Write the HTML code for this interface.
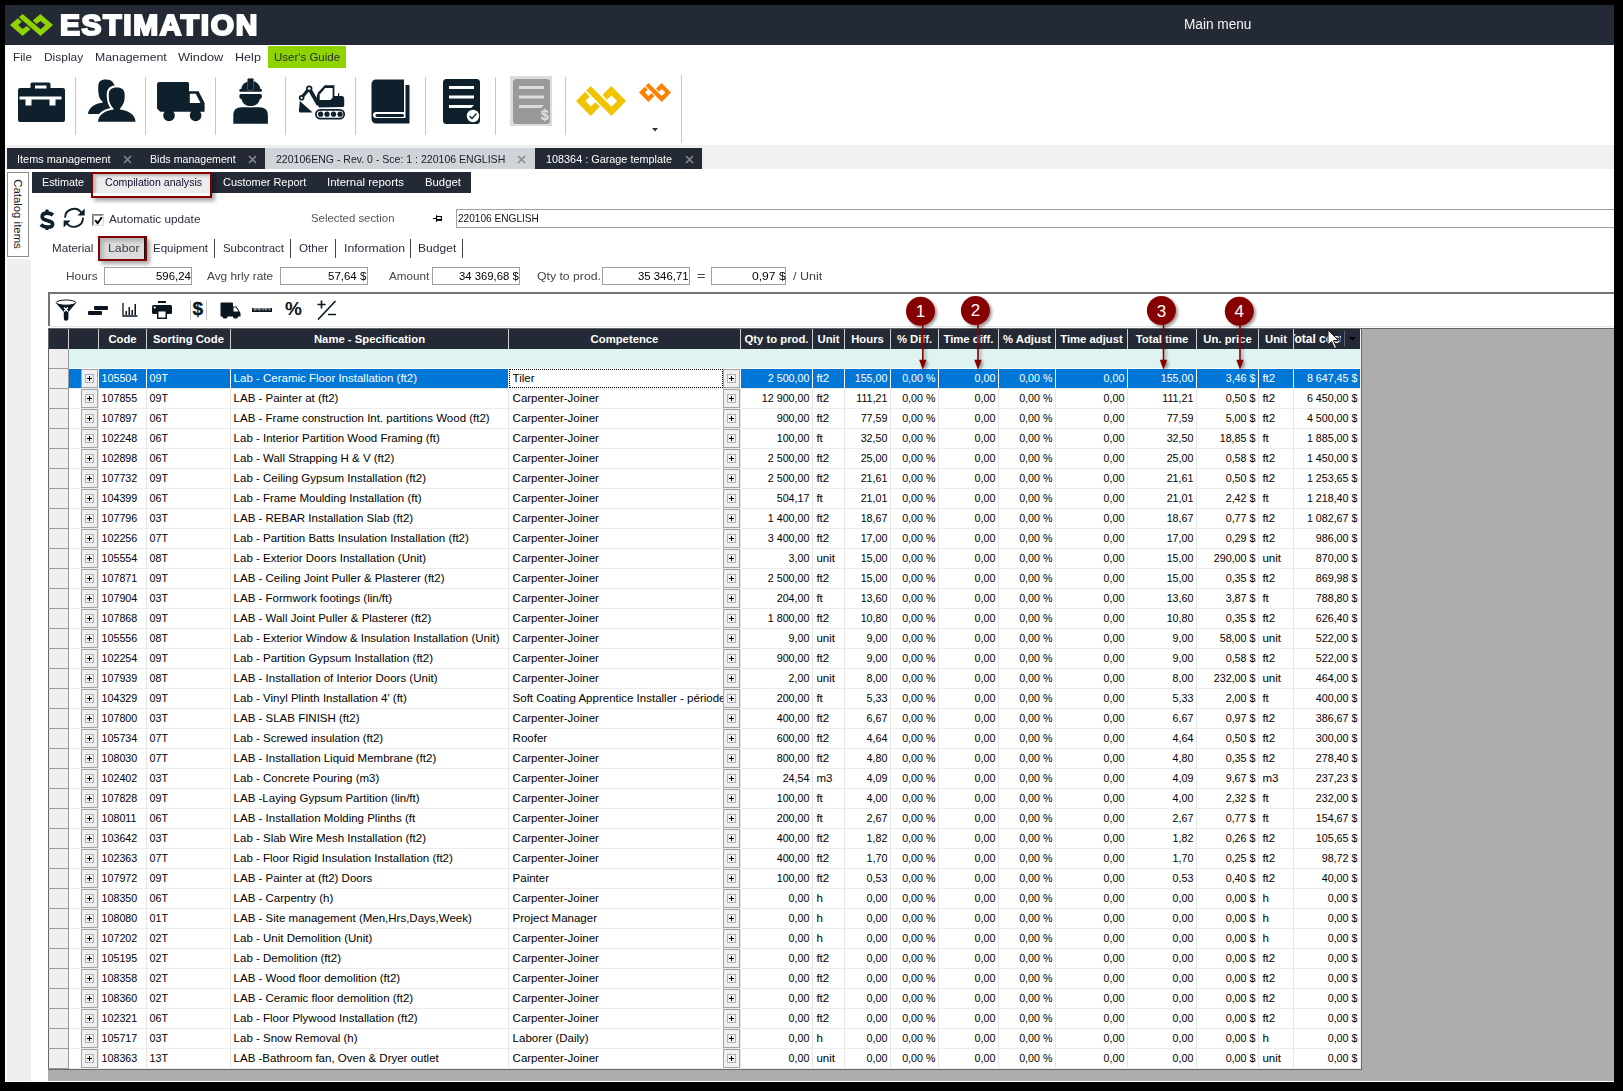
<!DOCTYPE html>
<html><head><meta charset="utf-8">
<style>
*{margin:0;padding:0;box-sizing:border-box}
html,body{width:1623px;height:1091px;overflow:hidden;background:#000}
body{position:relative;font-family:"Liberation Sans",sans-serif;font-size:11.3px;color:#000}
.a{position:absolute}
.t{position:absolute;white-space:nowrap}
.sep{position:absolute;width:1px;background:#c8c8c8}
.gr{position:absolute;left:48px;top:329px;width:1313px}
.hd{position:absolute;top:0;height:20px;background:#232a35;color:#fff;font-weight:bold;font-size:11.3px;line-height:20px;text-align:center;white-space:nowrap;overflow:hidden}
.c{position:absolute;height:19px;line-height:19px;white-space:nowrap;overflow:hidden;padding:0 2.6px;font-size:10.7px}
.n{font-size:11.5px}.u{font-size:11.5px;padding-left:3.4px}.cp{padding-left:3.6px}
.r{text-align:right}
.vl{position:absolute;width:1px;background:#e6e6e6}
.eb{position:absolute;width:17px;height:19px;background:#f0f0f0;border:1px solid #a3a3a3}
.eb:after{content:"";position:absolute;left:3px;top:4px;width:9px;height:9px;border:1px solid #a6b0cc;box-sizing:border-box}
.eb i{position:absolute;left:5px;top:8px;width:5px;height:1px;background:#000}
.eb b{position:absolute;left:7px;top:6px;width:1px;height:5px;background:#000}
.inp{position:absolute;height:18px;border:1px solid #a0a0a0;background:#fff;line-height:16px;text-align:right;padding-right:3px;white-space:nowrap}
</style></head><body>

<div class="a" style="left:5px;top:5px;width:1609px;height:1077px;background:#fff"></div>
<div class="a" style="left:5px;top:5px;width:1609px;height:40px;background:#232a35"></div>
<svg style="position:absolute;left:10px;top:14px" width="43" height="22" viewBox="110 110 1345 805" preserveAspectRatio="none"><path fill="#8fd400" d="M505 110 L1065 665 L1215 515 L1065 365 L935 480 L825 345 L1060 110 L1455 515 L1065 915 L385 230 Z"/><path fill="#8fd400" d="M355 265 L110 510 L505 915 L755 660 L630 545 L505 660 L365 515 L480 390 Z"/></svg>
<div class="t" style="left:60.2px;top:5.9px;font-size:28.6px;line-height:38px;color:#fff;font-weight:bold;letter-spacing:1.6px;transform:scaleX(1.046);transform-origin:0 0;-webkit-text-stroke:2.1px #fff">ESTIMATION</div>
<div class="t" style="left:1183.97px;top:16.02px;font-size:13.8px;line-height:18px;color:#f4f4f4;font-weight:normal;transform:scaleX(0.9878);transform-origin:0 0;">Main menu</div>
<div class="a" style="left:268px;top:46px;width:78px;height:22px;background:#8fd400"></div>
<div class="t" style="left:12.70px;top:47.58px;font-size:11.6px;line-height:18px;color:#2a2a3a;font-weight:normal;transform:scaleX(1.0118);transform-origin:0 0;">File</div>
<div class="t" style="left:43.50px;top:47.58px;font-size:11.6px;line-height:18px;color:#2a2a3a;font-weight:normal;transform:scaleX(1.0294);transform-origin:0 0;">Display</div>
<div class="t" style="left:94.60px;top:47.58px;font-size:11.6px;line-height:18px;color:#2a2a3a;font-weight:normal;transform:scaleX(1.0607);transform-origin:0 0;">Management</div>
<div class="t" style="left:178.30px;top:47.58px;font-size:11.6px;line-height:18px;color:#2a2a3a;font-weight:normal;transform:scaleX(1.0989);transform-origin:0 0;">Window</div>
<div class="t" style="left:235.40px;top:47.58px;font-size:11.6px;line-height:18px;color:#2a2a3a;font-weight:normal;transform:scaleX(1.0860);transform-origin:0 0;">Help</div>
<div class="t" style="left:273.60px;top:47.58px;font-size:11.6px;line-height:18px;color:#2a2a3a;font-weight:normal;transform:scaleX(0.9914);transform-origin:0 0;">User&#x27;s Guide</div>
<div class="sep" style="left:75px;top:77px;height:58px"></div>
<div class="sep" style="left:145px;top:77px;height:58px"></div>
<div class="sep" style="left:215px;top:77px;height:58px"></div>
<div class="sep" style="left:285px;top:77px;height:58px"></div>
<div class="sep" style="left:355px;top:77px;height:58px"></div>
<div class="sep" style="left:425px;top:77px;height:58px"></div>
<div class="sep" style="left:495px;top:77px;height:58px"></div>
<div class="sep" style="left:565px;top:77px;height:58px"></div>
<div class="sep" style="left:681px;top:75px;height:68px"></div>
<svg class="a" style="left:16px;top:81px" width="50" height="42" viewBox="0 0 50 42">
<path fill="#0f202d" d="M15.5 1.5 h17.5 a1.5 1.5 0 0 1 1.5 1.5 v4 h12.5 a2 2 0 0 1 2 2 v30 a2 2 0 0 1 -2 2 h-43 a2 2 0 0 1 -2 -2 v-30 a2 2 0 0 1 2 -2 h10.5 v-4 a1.5 1.5 0 0 1 1.5 -1.5 z M19 4.5 v3 h11.5 v-3 z"/>
<path fill="#fff" d="M3.5 15.5 h42 v3 h-6 v6 h-6 v-6 h-18 v6 h-6 v-6 h-6 z"/>
</svg>
<svg class="a" style="left:87px;top:79px" width="50" height="45" viewBox="0 0 50 45">
<path fill="#0f202d" d="M11.2 8.5 C11.2 2.5 13.5 0.45 18.9 0.45 C23 0.45 25.5 1.8 26.6 4.5 L30 10 V30 L20 34.9 H0.96 C1.8 28.5 8 24.5 16.2 23.6 L15 22.2 C12 19.5 11.2 15 11.2 8.5 Z"/>
<path fill="#0f202d" stroke="#fff" stroke-width="4.2" paint-order="stroke" d="M21.8 16 C21.8 10.5 24.5 8.4 29.7 8.4 C34.9 8.4 37.7 10.5 37.7 16 C37.7 21.5 37 25 33.8 28.5 L32.6 30.6 C41 31.5 48.2 35.5 48.5 42.8 H11 C11.5 35.5 18.5 31.5 26.9 30.6 L25.7 28.5 C22.5 25 21.8 21.5 21.8 16 Z"/>
</svg>
<svg class="a" style="left:156px;top:81px" width="50" height="42" viewBox="0 0 50 42">
<path fill="#0f202d" d="M1 3.5 a2.5 2.5 0 0 1 2.5 -2.5 H31.5 a1.5 1.5 0 0 1 1.5 1.5 V10.3 H42.6 L48.6 21.9 V30.7 H4.25 L1 27.4 Z"/>
<path fill="#fff" d="M33.8 12.7 H39.8 L44.5 21.9 H33.8 Z"/>
<circle fill="#0f202d" cx="13" cy="34.4" r="5.8"/>
<circle fill="#0f202d" cx="39.6" cy="34.4" r="5.8"/>
</svg>
<svg class="a" style="left:232px;top:77px" width="38" height="48" viewBox="0 0 38 48">
<path fill="#0f202d" d="M9.1 12.5 A9.7 8.6 0 0 1 28.5 12.5 Z"/>
<rect fill="#0f202d" x="7.3" y="12" width="22.6" height="2.8" rx="1"/>
<rect fill="#0f202d" stroke="#6a7580" stroke-width="0.6" x="15.6" y="1.4" width="6" height="12" rx="1.2"/>
<path fill="#0f202d" d="M1.3 46.7 V39 C1.3 33.5 3.5 31 8 30.6 L10 30.2 H27.2 L29.2 30.6 C33.7 31 35.9 33.5 35.9 39 V46.7 Z"/>
<path fill="#0f202d" stroke="#fff" stroke-width="2.2" paint-order="stroke" d="M8.5 17.1 H28.7 C30.2 17.1 30.2 21.7 28.7 21.7 H28 C27 26.5 23.5 29.1 18.7 29.1 C13.9 29.1 10.4 26.5 9.4 21.7 H8.5 C7 21.7 7 17.1 8.5 17.1 Z"/>
</svg>
<svg class="a" style="left:297px;top:84px" width="50" height="38" viewBox="0 0 50 38">
<path fill="#0f202d" d="M20.8 8.7 L27.7 1.3 H37.4 V12 H45 Q47.2 12 47.2 14.5 V21.5 Q47.2 23.1 45.6 23.1 L22.2 23.5 L18.5 17.5 Z"/>
<path fill="#fff" d="M22.7 10.6 L28.2 4.1 H35.6 V13.8 L33.3 16.1 H22.7 Z"/>
<rect fill="#0f202d" x="41" y="9.2" width="1.2" height="3"/>
<path fill="none" stroke="#0f202d" stroke-width="3.8" d="M12.2 4.6 L21.5 20.8"/>
<path fill="none" stroke="#0f202d" stroke-width="3.2" d="M12.2 4.6 L4.6 13.8"/>
<circle fill="#0f202d" cx="12.2" cy="4.6" r="3.2"/><circle fill="#fff" cx="12.2" cy="4.6" r="1.4"/>
<circle fill="#0f202d" cx="4.6" cy="13.8" r="2.8"/><circle fill="#fff" cx="4.6" cy="13.8" r="1.1"/>
<path fill="#0f202d" d="M2.8 17 L15.7 28.6 H3.5 Q1.9 28.6 1.9 27 Z"/>
<rect fill="none" stroke="#0f202d" stroke-width="1.8" x="18.9" y="25.8" width="28.3" height="8.8" rx="4.4"/>
<circle fill="#0f202d" cx="23.6" cy="30.2" r="2.6"/><circle fill="#0f202d" cx="30" cy="30.2" r="2.6"/><circle fill="#0f202d" cx="36.5" cy="30.2" r="2.6"/><circle fill="#0f202d" cx="43" cy="30.2" r="2.6"/>
</svg>
<svg class="a" style="left:371px;top:79px" width="40" height="46" viewBox="0 0 40 46">
<path fill="#0f202d" d="M5 0.5 H33 V33 H5 A3 3 0 0 0 5 39 H34.5 V6 H38.5 V44.5 H5 A4.5 4.5 0 0 1 0.5 40 V5 A4.5 4.5 0 0 1 5 0.5 Z"/>
<rect fill="#0f202d" x="4.5" y="35" width="28.5" height="3" rx="1.5"/>
</svg>
<svg class="a" style="left:442px;top:78px" width="40" height="47" viewBox="0 0 40 47">
<rect fill="#0f202d" x="1" y="1" width="37" height="45" rx="3.5"/>
<rect fill="#fff" x="7" y="8" width="25" height="3"/>
<rect fill="#fff" x="7" y="17.5" width="25" height="3"/>
<path fill="#fff" d="M7 27 H32 L29 30 H7 Z"/>
<circle fill="#fff" cx="31" cy="38" r="6.2"/>
<path fill="none" stroke="#0f202d" stroke-width="1.3" d="M27.5 38 L30 40.5 L34.5 35.5"/>
</svg>
<div class="a" style="left:510px;top:76px;width:42px;height:50px;background:#dcdcdc"></div>
<svg class="a" style="left:512px;top:78px" width="40" height="47" viewBox="0 0 40 47">
<rect fill="#999" x="1" y="1" width="37" height="45" rx="3.5"/>
<rect fill="#ddd" x="7" y="8" width="25" height="3"/>
<rect fill="#ddd" x="7" y="17.5" width="25" height="3"/>
<path fill="#ddd" d="M7 27 H32 L29 30 H7 Z"/>
<text x="32.8" y="41.6" font-family="Liberation Sans" font-size="14.5" font-weight="bold" fill="#ddd" stroke="#ddd" stroke-width="0.3" text-anchor="middle">$</text>
</svg>
<svg style="position:absolute;left:576px;top:86px" width="50" height="30" viewBox="110 110 1345 805" preserveAspectRatio="none"><path fill="#f0c400" d="M505 110 L1065 665 L1215 515 L1065 365 L935 480 L825 345 L1060 110 L1455 515 L1065 915 L385 230 Z"/><path fill="#f0c400" d="M355 265 L110 510 L505 915 L755 660 L630 545 L505 660 L365 515 L480 390 Z"/></svg>
<svg style="position:absolute;left:639px;top:82.5px" width="32" height="19" viewBox="110 110 1345 805" preserveAspectRatio="none"><path fill="#ff8000" d="M505 110 L1065 665 L1215 515 L1065 365 L935 480 L825 345 L1060 110 L1455 515 L1065 915 L385 230 Z"/><path fill="#ff8000" d="M355 265 L110 510 L505 915 L755 660 L630 545 L505 660 L365 515 L480 390 Z"/></svg>
<svg class="a" style="left:651.5px;top:127.5px" width="6" height="4" viewBox="0 0 6 4"><path d="M0 0 H6 L3 3.5 Z" fill="#333"/></svg>
<div class="a" style="left:5px;top:145px;width:1609px;height:24px;background:#f0f0f0"></div>
<div class="a" style="left:7px;top:148px;width:695px;height:21px;background:#232a35"></div>
<div class="a" style="left:265px;top:148px;width:270px;height:21px;background:#cfd4d9"></div>
<div class="t" style="left:17.16px;top:150.13px;font-size:10.6px;line-height:18px;color:#fff;font-weight:normal;transform:scaleX(1.0311);transform-origin:0 0;">Items management</div>
<svg class="a" style="left:122.8px;top:155px" width="9" height="9" viewBox="0 0 9 9"><path d="M1 1 L8 8 M8 1 L1 8" stroke="#8a8a8a" stroke-width="1.6"/></svg>
<div class="t" style="left:149.86px;top:150.13px;font-size:10.6px;line-height:18px;color:#fff;font-weight:normal;transform:scaleX(1.0033);transform-origin:0 0;">Bids management</div>
<svg class="a" style="left:247.9px;top:155px" width="9" height="9" viewBox="0 0 9 9"><path d="M1 1 L8 8 M8 1 L1 8" stroke="#8a8a8a" stroke-width="1.6"/></svg>
<div class="t" style="left:275.56px;top:150.13px;font-size:10.6px;line-height:18px;color:#1a1a2a;font-weight:normal;transform:scaleX(0.9940);transform-origin:0 0;">220106ENG - Rev. 0 - Sce: 1 : 220106 ENGLISH</div>
<svg class="a" style="left:517.2px;top:155px" width="9" height="9" viewBox="0 0 9 9"><path d="M1 1 L8 8 M8 1 L1 8" stroke="#8a8a8a" stroke-width="1.6"/></svg>
<div class="t" style="left:545.76px;top:150.13px;font-size:10.6px;line-height:18px;color:#fff;font-weight:normal;transform:scaleX(1.0236);transform-origin:0 0;">108364 : Garage template</div>
<svg class="a" style="left:684.5px;top:155px" width="9" height="9" viewBox="0 0 9 9"><path d="M1 1 L8 8 M8 1 L1 8" stroke="#8a8a8a" stroke-width="1.6"/></svg>
<div class="a" style="left:7px;top:172px;width:22px;height:85px;background:#fff;border:1px solid #8c8c8c"></div>
<div class="t" style="left:18px;top:214px;transform:translate(-50%,-50%) rotate(90deg);font-size:11.4px;line-height:14px;color:#1a1a1a">Catalog items</div>
<div class="a" style="left:7px;top:259px;width:24px;height:822px;background:#efefef"></div>
<div class="a" style="left:32px;top:172px;width:439px;height:21px;background:#232a35"></div>
<div class="t" style="left:42.08px;top:174.00px;font-size:10.4px;line-height:18px;color:#fff;font-weight:normal;transform:scaleX(1.0390);transform-origin:0 0;">Estimate</div>
<div class="t" style="left:222.78px;top:174.00px;font-size:10.4px;line-height:18px;color:#fff;font-weight:normal;transform:scaleX(1.0529);transform-origin:0 0;">Customer Report</div>
<div class="t" style="left:326.98px;top:174.00px;font-size:10.4px;line-height:18px;color:#fff;font-weight:normal;transform:scaleX(1.0999);transform-origin:0 0;">Internal reports</div>
<div class="t" style="left:424.98px;top:174.00px;font-size:10.4px;line-height:18px;color:#fff;font-weight:normal;transform:scaleX(1.0887);transform-origin:0 0;">Budget</div>
<div class="a" style="left:91px;top:172px;width:121px;height:26px;border:2px solid #840000;box-shadow:3px 3px 4px rgba(0,0,0,0.35);background:#fff"></div>
<div class="a" style="left:93px;top:174px;width:117px;height:19px;background:#ececec;box-shadow:inset 3px 2px 3px rgba(0,0,0,0.22)"></div>
<div class="t" style="left:105.08px;top:174.00px;font-size:10.4px;line-height:18px;color:#0a0a30;font-weight:normal;transform:scaleX(1.0186);transform-origin:0 0;">Compilation analysis</div>
<svg class="a" style="left:39px;top:209px" width="17" height="22" viewBox="0 0 17 22">
<rect fill="#0f202d" x="6.4" y="0.5" width="3.2" height="3.6" rx="0.8"/>
<rect fill="#0f202d" x="6.4" y="17.2" width="3.2" height="3.8" rx="0.8"/>
<path fill="none" stroke="#0f202d" stroke-width="3.7" d="M14 6 C12.2 4.6 10.2 4.1 8.2 4.1 C5.2 4.1 3.2 5.5 3.2 7.7 C3.2 10.4 6 11 8.5 11.6 C11.6 12.3 13.6 13.1 13.6 15.2 C13.6 17.2 11.2 18.2 8.2 18.2 C5.9 18.2 3.6 17.4 1.8 15.7"/>
</svg>
<svg class="a" style="left:62px;top:207px" width="24" height="23" viewBox="0 0 24 23">
<path fill="none" stroke="#0f202d" stroke-width="1.9" d="M3.05 10.8 A9 9 0 0 1 19.4 5.64"/>
<path fill="#0f202d" d="M22.7 1.5 V8.5 H15.5 Z"/>
<path fill="none" stroke="#0f202d" stroke-width="1.9" d="M21.05 10.8 A9 9 0 0 1 4.68 15.96"/>
<path fill="#0f202d" d="M1.65 20.5 V13.56 H8.6 Z"/>
</svg>
<div class="a" style="left:92px;top:214px;width:12px;height:12px;border:1px solid;border-color:#7a7a7a #dcdcdc #dcdcdc #7a7a7a;background:#fff"></div>
<div class="a" style="left:93px;top:215px;width:10px;height:10px;border:1px solid;border-color:#a0a0a0 #f4f4f4 #f4f4f4 #a0a0a0"></div>
<svg class="a" style="left:94px;top:216px" width="9" height="9" viewBox="0 0 9 9"><path d="M1.2 4.2 L3.6 7.2 L7.8 1.2" fill="none" stroke="#000" stroke-width="2"/></svg>
<div class="t" style="left:109.33px;top:209.95px;font-size:11.1px;line-height:18px;color:#2b2b40;font-weight:normal;transform:scaleX(1.0587);transform-origin:0 0;">Automatic update</div>
<div class="t" style="left:310.55px;top:209.06px;font-size:10.8px;line-height:18px;color:#555;font-weight:normal;transform:scaleX(1.0534);transform-origin:0 0;">Selected section</div>
<svg class="a" style="left:433px;top:214px" width="10" height="9" viewBox="0 0 10 9"><path d="M0 4.5 H3.5 M3.6 1.2 V7.8 M3.6 2.5 H8.4 V6.5" fill="none" stroke="#000" stroke-width="1.1"/><rect x="3.6" y="5" width="5.4" height="1.9" fill="#000"/></svg>
<div class="a" style="left:456px;top:209px;width:1158px;height:19px;border:1px solid #a0a0a0;border-right:none;background:#fff"></div>
<div class="t" style="left:457.65px;top:209.06px;font-size:10.8px;line-height:18px;color:#111;font-weight:normal;transform:scaleX(0.9361);transform-origin:0 0;">220106 ENGLISH</div>
<div class="t" style="left:51.53px;top:238.95px;font-size:11.1px;line-height:18px;color:#2b2b40;font-weight:normal;transform:scaleX(1.0489);transform-origin:0 0;">Material</div>
<div class="a" style="left:98px;top:236px;width:49px;height:25px;border:2px solid #840000;box-shadow:3px 3px 4px rgba(0,0,0,0.35);background:#dcdcdc"></div>
<div class="a" style="left:100px;top:238px;width:45px;height:21px;box-shadow:inset 3px 3px 4px rgba(0,0,0,0.2)"></div>
<div class="a" style="left:144px;top:238px;width:1px;height:21px;background:#111"></div>
<div class="t" style="left:107.53px;top:238.95px;font-size:11.1px;line-height:18px;color:#3a3a4a;font-weight:normal;transform:scaleX(1.1093);transform-origin:0 0;">Labor</div>
<div class="t" style="left:152.53px;top:238.95px;font-size:11.1px;line-height:18px;color:#2b2b40;font-weight:normal;transform:scaleX(1.0365);transform-origin:0 0;">Equipment</div>
<div class="t" style="left:222.63px;top:238.95px;font-size:11.1px;line-height:18px;color:#2b2b40;font-weight:normal;transform:scaleX(1.0281);transform-origin:0 0;">Subcontract</div>
<div class="t" style="left:298.53px;top:238.95px;font-size:11.1px;line-height:18px;color:#2b2b40;font-weight:normal;transform:scaleX(1.0485);transform-origin:0 0;">Other</div>
<div class="t" style="left:343.63px;top:238.95px;font-size:11.1px;line-height:18px;color:#2b2b40;font-weight:normal;transform:scaleX(1.1021);transform-origin:0 0;">Information</div>
<div class="t" style="left:418.33px;top:238.95px;font-size:11.1px;line-height:18px;color:#2b2b40;font-weight:normal;transform:scaleX(1.0875);transform-origin:0 0;">Budget</div>
<div class="a" style="left:214px;top:239px;width:1px;height:19px;background:#444"></div>
<div class="a" style="left:290px;top:239px;width:1px;height:19px;background:#444"></div>
<div class="a" style="left:335px;top:239px;width:1px;height:19px;background:#444"></div>
<div class="a" style="left:410px;top:239px;width:1px;height:19px;background:#444"></div>
<div class="a" style="left:462px;top:239px;width:1px;height:19px;background:#444"></div>
<div class="t" style="left:66.34px;top:267.29px;font-size:11px;line-height:18px;color:#444;font-weight:normal;transform:scaleX(1.0777);transform-origin:0 0;">Hours</div>
<div class="t" style="left:207.14px;top:267.29px;font-size:11px;line-height:18px;color:#444;font-weight:normal;transform:scaleX(1.0740);transform-origin:0 0;">Avg hrly rate</div>
<div class="t" style="left:389.14px;top:267.29px;font-size:11px;line-height:18px;color:#444;font-weight:normal;transform:scaleX(1.0601);transform-origin:0 0;">Amount</div>
<div class="t" style="left:537.34px;top:267.29px;font-size:11px;line-height:18px;color:#444;font-weight:normal;transform:scaleX(1.1128);transform-origin:0 0;">Qty to prod.</div>
<div class="t" style="left:793.24px;top:267.29px;font-size:11px;line-height:18px;color:#444;font-weight:normal;transform:scaleX(1.1368);transform-origin:0 0;">/ Unit</div>
<div class="t" style="left:697.04px;top:267.29px;font-size:11px;line-height:18px;color:#444;font-weight:normal;transform:scaleX(1.3092);transform-origin:0 0;">=</div>
<div class="a" style="left:104px;top:267px;width:88px;height:18px;border:1px solid #a0a0a0;background:#fff"></div>
<div class="a" style="left:280px;top:267px;width:88px;height:18px;border:1px solid #a0a0a0;background:#fff"></div>
<div class="a" style="left:432px;top:267px;width:88px;height:18px;border:1px solid #a0a0a0;background:#fff"></div>
<div class="a" style="left:602px;top:267px;width:88px;height:18px;border:1px solid #a0a0a0;background:#fff"></div>
<div class="a" style="left:711px;top:267px;width:75px;height:18px;border:1px solid #a0a0a0;background:#fff"></div>
<div class="t" style="left:155.74px;top:267.29px;font-size:11px;line-height:18px;color:#000;font-weight:normal;transform:scaleX(1.0391);transform-origin:0 0;">596,24</div>
<div class="t" style="left:328.44px;top:267.29px;font-size:11px;line-height:18px;color:#000;font-weight:normal;transform:scaleX(1.0429);transform-origin:0 0;">57,64 $</div>
<div class="t" style="left:459.34px;top:267.29px;font-size:11px;line-height:18px;color:#000;font-weight:normal;transform:scaleX(1.0281);transform-origin:0 0;">34 369,68 $</div>
<div class="t" style="left:637.94px;top:267.29px;font-size:11px;line-height:18px;color:#000;font-weight:normal;transform:scaleX(1.0332);transform-origin:0 0;">35 346,71</div>
<div class="t" style="left:751.74px;top:267.29px;font-size:11px;line-height:18px;color:#000;font-weight:normal;transform:scaleX(1.1000);transform-origin:0 0;">0,97 $</div>
<div class="a" style="left:48px;top:292px;width:1566px;height:2px;background:#747474"></div>
<div class="a" style="left:48px;top:292px;width:2px;height:34px;background:#747474"></div>
<div class="a" style="left:49px;top:326px;width:1565px;height:1px;background:#e4e4e4"></div>
<svg class="a" style="left:55px;top:299px" width="22" height="22" viewBox="0 0 22 22">
<path fill="#0a1520" d="M1.2 4.2 L8.8 13 V19.5 A2.2 2.2 0 0 0 13.4 19.5 V13 L20.8 4.2 Z"/>
<ellipse fill="#fff" stroke="#0a1520" stroke-width="1" cx="11" cy="3.6" rx="9.8" ry="2.6"/>
<path d="M9 8.5 L13 12.5 M13 8.5 L9 12.5" stroke="#fff" stroke-width="1.4"/>
</svg>
<div class="a" style="left:94px;top:306px;width:14px;height:3.5px;background:#0a1520;border-radius:1px"></div>
<div class="a" style="left:88px;top:311px;width:14px;height:3.5px;background:#0a1520;border-radius:1px"></div>
<svg class="a" style="left:122px;top:303px" width="16" height="14" viewBox="0 0 16 14">
<path fill="none" stroke="#0a1520" stroke-width="1.3" d="M1 0 V13 H15.5"/>
<rect fill="#0a1520" x="3.5" y="8" width="1.5" height="4"/><rect fill="#0a1520" x="6.5" y="4" width="1.5" height="8"/><rect fill="#0a1520" x="9.5" y="7" width="1.5" height="5"/><rect fill="#0a1520" x="12.5" y="1" width="1.5" height="11"/>
</svg>
<svg class="a" style="left:152px;top:301px" width="20" height="18" viewBox="0 0 20 18">
<rect fill="#0a1520" x="6" y="0" width="8" height="2"/>
<rect fill="#0a1520" x="0" y="4" width="20" height="9" rx="1.5"/>
<circle fill="#fff" cx="2.7" cy="6.5" r="1.1"/>
<rect fill="#0a1520" x="5" y="9" width="10" height="9"/>
<rect fill="#fff" x="6.5" y="10.5" width="7" height="6"/>
</svg>
<div class="a" style="left:190px;top:300px;width:1px;height:20px;background:#c8c8c8"></div>
<div class="a" style="left:206px;top:300px;width:1px;height:20px;background:#c8c8c8"></div>
<div class="t" style="left:192.5px;top:298px;font-size:19px;font-weight:bold;line-height:22px;color:#0a1520;-webkit-text-stroke:0.35px #0a1520">$</div>
<svg class="a" style="left:220px;top:302px" width="21" height="17" viewBox="0 0 21 17">
<path fill="#0a1520" d="M1 0.5 h11 a1 1 0 0 1 1 1 v3 h3.5 l4 6.5 v3.5 h-20 v-13 a1 1 0 0 1 0.5 -1 z"/>
<path fill="#fff" d="M13.5 5.5 h2.5 l2.5 4 h-5 z"/>
<circle fill="#0a1520" cx="5" cy="14" r="2.6"/><circle fill="#0a1520" cx="15.5" cy="14" r="2.6"/>
</svg>
<svg class="a" style="left:252px;top:307px" width="20" height="5" viewBox="0 0 20 5">
<rect fill="#8a8f94" x="0" y="1" width="20" height="3"/>
<rect fill="#0a1520" x="0" y="1" width="1.6" height="4" rx="0.6"/><rect fill="#0a1520" x="18.4" y="1" width="1.6" height="4" rx="0.6"/>
<rect fill="#0a1520" x="0" y="3.4" width="20" height="1.6" rx="0.6"/>
<rect fill="#0a1520" x="4.5" y="2.2" width="1.4" height="2"/><rect fill="#0a1520" x="8.6" y="1.8" width="1.6" height="2"/><rect fill="#0a1520" x="11.6" y="2.2" width="1.2" height="2"/><rect fill="#0a1520" x="15" y="1.8" width="1.6" height="2"/>
</svg>
<div class="t" style="left:285px;top:298px;font-size:19px;font-weight:bold;line-height:22px;color:#0a1520">%</div>
<svg class="a" style="left:317px;top:300px" width="20" height="20" viewBox="0 0 20 20">
<path stroke="#0a1520" stroke-width="1.6" fill="none" d="M1 19.5 L18.5 1 M4.5 0.5 V8.5 M0.5 4.5 H8.5 M11 14.5 H19"/>
</svg>
<div class="a" style="left:1362px;top:329px;width:252px;height:752px;background:#acacac"></div>
<div class="a" style="left:48px;top:1070px;width:1566px;height:11px;background:#acacac"></div>
<div class="a" style="left:48px;top:1069px;width:1314px;height:1px;background:#6a6a6a"></div>
<div class="a" style="left:48px;top:328px;width:1566px;height:1px;background:#666"></div>
<div class="a" style="left:1360px;top:329px;width:1px;height:740px;background:#f4f4f4"></div>
<div class="a" style="left:1361px;top:329px;width:1px;height:741px;background:#666"></div>
<div class="a" style="left:49px;top:329px;width:1311px;height:20px;background:#232a35"></div>
<div class="a" style="left:68px;top:329px;width:1px;height:20px;background:#cfcfcf"></div>
<div class="a" style="left:98px;top:329px;width:1px;height:20px;background:#cfcfcf"></div>
<div class="hd" style="left:99px;top:329px;width:47px">Code</div>
<div class="a" style="left:146px;top:329px;width:1px;height:20px;background:#cfcfcf"></div>
<div class="hd" style="left:147px;top:329px;width:83px">Sorting Code</div>
<div class="a" style="left:230px;top:329px;width:1px;height:20px;background:#cfcfcf"></div>
<div class="hd" style="left:231px;top:329px;width:277px">Name - Specification</div>
<div class="a" style="left:508px;top:329px;width:1px;height:20px;background:#cfcfcf"></div>
<div class="hd" style="left:509px;top:329px;width:231px">Competence</div>
<div class="a" style="left:740px;top:329px;width:1px;height:20px;background:#cfcfcf"></div>
<div class="hd" style="left:741px;top:329px;width:71px">Qty to prod.</div>
<div class="a" style="left:812px;top:329px;width:1px;height:20px;background:#cfcfcf"></div>
<div class="hd" style="left:813px;top:329px;width:31px">Unit</div>
<div class="a" style="left:844px;top:329px;width:1px;height:20px;background:#cfcfcf"></div>
<div class="hd" style="left:845px;top:329px;width:45px">Hours</div>
<div class="a" style="left:890px;top:329px;width:1px;height:20px;background:#cfcfcf"></div>
<div class="hd" style="left:891px;top:329px;width:47px">% Diff.</div>
<div class="a" style="left:938px;top:329px;width:1px;height:20px;background:#cfcfcf"></div>
<div class="hd" style="left:939px;top:329px;width:59px">Time diff.</div>
<div class="a" style="left:998px;top:329px;width:1px;height:20px;background:#cfcfcf"></div>
<div class="hd" style="left:999px;top:329px;width:56px">% Adjust</div>
<div class="a" style="left:1055px;top:329px;width:1px;height:20px;background:#cfcfcf"></div>
<div class="hd" style="left:1056px;top:329px;width:71px">Time adjust</div>
<div class="a" style="left:1127px;top:329px;width:1px;height:20px;background:#cfcfcf"></div>
<div class="hd" style="left:1128px;top:329px;width:68px">Total time</div>
<div class="a" style="left:1196px;top:329px;width:1px;height:20px;background:#cfcfcf"></div>
<div class="hd" style="left:1197px;top:329px;width:61px">Un. price</div>
<div class="a" style="left:1258px;top:329px;width:1px;height:20px;background:#cfcfcf"></div>
<div class="hd" style="left:1259px;top:329px;width:34px">Unit</div>
<div class="a" style="left:1293px;top:329px;width:1px;height:20px;background:#cfcfcf"></div>
<div class="hd" style="left:1294px;top:329px;width:47px"><span style="position:absolute;left:-6px;top:0;font-size:12px">Total cost</span></div>
<div class="a" style="left:1344px;top:331px;width:1px;height:15px;background:#5a6270"></div>
<svg class="a" style="left:1349px;top:337px" width="7" height="4" viewBox="0 0 7 4"><path d="M0 0 H7 L3.5 4 Z" fill="#000"/></svg>
<svg class="a" style="left:1327px;top:329px" width="13" height="21" viewBox="0 0 13 21"><path d="M1 1 V16 L4.5 12.5 L7.5 19.5 L9.5 18.5 L6.5 11.5 H11.5 Z" fill="#fff" stroke="#1a1a1a" stroke-width="1" stroke-linejoin="round"/></svg>
<div class="a" style="left:68px;top:349px;width:1292px;height:19px;background:#dff3f1"></div>
<div class="a" style="left:48px;top:349px;width:21px;height:720px;background:#efefef;border-right:1px solid #9a9a9a"></div>
<div class="a" style="left:48px;top:368px;width:21px;height:1px;background:#9a9a9a"></div>
<div class="a" style="left:48px;top:328px;width:1px;height:741px;background:#666"></div>
<div class="a" style="left:69px;top:369px;width:12px;height:19px;background:#0076d6"></div>
<div class="a" style="left:99px;top:369px;width:410px;height:19px;background:#0076d6"></div>
<div class="a" style="left:740px;top:369px;width:620px;height:19px;background:#0076d6"></div>
<div class="a" style="left:48px;top:388px;width:21px;height:1px;background:#9a9a9a"></div>
<div class="a" style="left:69px;top:388px;width:1291px;height:1px;background:#ececec"></div>
<div class="eb" style="left:81px;top:369px"><i></i><b></b></div>
<div class="eb" style="left:723px;top:369px"><i></i><b></b></div>
<div class="c" style="left:99px;top:369px;width:47px;color:#fff">105504</div>
<div class="c" style="left:147px;top:369px;width:83px;color:#fff">09T</div>
<div class="c n" style="left:231px;top:369px;width:277px;color:#fff">Lab - Ceramic Floor Installation (ft2)</div>
<div class="c n cp" style="left:509px;top:369px;width:214px;color:#fff">Tiler</div>
<div class="c r" style="left:741px;top:369px;width:71px;color:#fff">2 500,00</div>
<div class="c u" style="left:813px;top:369px;width:31px;color:#fff">ft2</div>
<div class="c r" style="left:845px;top:369px;width:45px;color:#fff">155,00</div>
<div class="c r" style="left:891px;top:369px;width:47px;color:#fff">0,00 %</div>
<div class="c r" style="left:939px;top:369px;width:59px;color:#fff">0,00</div>
<div class="c r" style="left:999px;top:369px;width:56px;color:#fff">0,00 %</div>
<div class="c r" style="left:1056px;top:369px;width:71px;color:#fff">0,00</div>
<div class="c r" style="left:1128px;top:369px;width:68px;color:#fff">155,00</div>
<div class="c r" style="left:1197px;top:369px;width:61px;color:#fff">3,46 $</div>
<div class="c u" style="left:1259px;top:369px;width:34px;color:#fff">ft2</div>
<div class="c r" style="left:1294px;top:369px;width:66px;color:#fff">8 647,45 $</div>
<div class="vl" style="left:98px;top:369px;height:19px;background:#fff"></div>
<div class="vl" style="left:146px;top:369px;height:19px;background:#fff"></div>
<div class="vl" style="left:230px;top:369px;height:19px;background:#fff"></div>
<div class="vl" style="left:508px;top:369px;height:19px;background:#fff"></div>
<div class="vl" style="left:740px;top:369px;height:19px;background:#fff"></div>
<div class="vl" style="left:812px;top:369px;height:19px;background:#fff"></div>
<div class="vl" style="left:844px;top:369px;height:19px;background:#fff"></div>
<div class="vl" style="left:890px;top:369px;height:19px;background:#fff"></div>
<div class="vl" style="left:938px;top:369px;height:19px;background:#fff"></div>
<div class="vl" style="left:998px;top:369px;height:19px;background:#fff"></div>
<div class="vl" style="left:1055px;top:369px;height:19px;background:#fff"></div>
<div class="vl" style="left:1127px;top:369px;height:19px;background:#fff"></div>
<div class="vl" style="left:1196px;top:369px;height:19px;background:#fff"></div>
<div class="vl" style="left:1258px;top:369px;height:19px;background:#fff"></div>
<div class="vl" style="left:1293px;top:369px;height:19px;background:#fff"></div>
<div class="a" style="left:48px;top:408px;width:21px;height:1px;background:#9a9a9a"></div>
<div class="a" style="left:69px;top:408px;width:1291px;height:1px;background:#ececec"></div>
<div class="eb" style="left:81px;top:389px"><i></i><b></b></div>
<div class="eb" style="left:723px;top:389px"><i></i><b></b></div>
<div class="c" style="left:99px;top:389px;width:47px;color:#000">107855</div>
<div class="c" style="left:147px;top:389px;width:83px;color:#000">09T</div>
<div class="c n" style="left:231px;top:389px;width:277px;color:#000">LAB - Painter at (ft2)</div>
<div class="c n cp" style="left:509px;top:389px;width:214px;color:#000">Carpenter-Joiner</div>
<div class="c r" style="left:741px;top:389px;width:71px;color:#000">12 900,00</div>
<div class="c u" style="left:813px;top:389px;width:31px;color:#000">ft2</div>
<div class="c r" style="left:845px;top:389px;width:45px;color:#000">111,21</div>
<div class="c r" style="left:891px;top:389px;width:47px;color:#000">0,00 %</div>
<div class="c r" style="left:939px;top:389px;width:59px;color:#000">0,00</div>
<div class="c r" style="left:999px;top:389px;width:56px;color:#000">0,00 %</div>
<div class="c r" style="left:1056px;top:389px;width:71px;color:#000">0,00</div>
<div class="c r" style="left:1128px;top:389px;width:68px;color:#000">111,21</div>
<div class="c r" style="left:1197px;top:389px;width:61px;color:#000">0,50 $</div>
<div class="c u" style="left:1259px;top:389px;width:34px;color:#000">ft2</div>
<div class="c r" style="left:1294px;top:389px;width:66px;color:#000">6 450,00 $</div>
<div class="vl" style="left:98px;top:389px;height:19px;background:#e6e6e6"></div>
<div class="vl" style="left:146px;top:389px;height:19px;background:#e6e6e6"></div>
<div class="vl" style="left:230px;top:389px;height:19px;background:#e6e6e6"></div>
<div class="vl" style="left:508px;top:389px;height:19px;background:#e6e6e6"></div>
<div class="vl" style="left:740px;top:389px;height:19px;background:#e6e6e6"></div>
<div class="vl" style="left:812px;top:389px;height:19px;background:#e6e6e6"></div>
<div class="vl" style="left:844px;top:389px;height:19px;background:#e6e6e6"></div>
<div class="vl" style="left:890px;top:389px;height:19px;background:#e6e6e6"></div>
<div class="vl" style="left:938px;top:389px;height:19px;background:#e6e6e6"></div>
<div class="vl" style="left:998px;top:389px;height:19px;background:#e6e6e6"></div>
<div class="vl" style="left:1055px;top:389px;height:19px;background:#e6e6e6"></div>
<div class="vl" style="left:1127px;top:389px;height:19px;background:#e6e6e6"></div>
<div class="vl" style="left:1196px;top:389px;height:19px;background:#e6e6e6"></div>
<div class="vl" style="left:1258px;top:389px;height:19px;background:#e6e6e6"></div>
<div class="vl" style="left:1293px;top:389px;height:19px;background:#e6e6e6"></div>
<div class="a" style="left:48px;top:428px;width:21px;height:1px;background:#9a9a9a"></div>
<div class="a" style="left:69px;top:428px;width:1291px;height:1px;background:#ececec"></div>
<div class="eb" style="left:81px;top:409px"><i></i><b></b></div>
<div class="eb" style="left:723px;top:409px"><i></i><b></b></div>
<div class="c" style="left:99px;top:409px;width:47px;color:#000">107897</div>
<div class="c" style="left:147px;top:409px;width:83px;color:#000">06T</div>
<div class="c n" style="left:231px;top:409px;width:277px;color:#000">LAB - Frame construction Int. partitions Wood (ft2)</div>
<div class="c n cp" style="left:509px;top:409px;width:214px;color:#000">Carpenter-Joiner</div>
<div class="c r" style="left:741px;top:409px;width:71px;color:#000">900,00</div>
<div class="c u" style="left:813px;top:409px;width:31px;color:#000">ft2</div>
<div class="c r" style="left:845px;top:409px;width:45px;color:#000">77,59</div>
<div class="c r" style="left:891px;top:409px;width:47px;color:#000">0,00 %</div>
<div class="c r" style="left:939px;top:409px;width:59px;color:#000">0,00</div>
<div class="c r" style="left:999px;top:409px;width:56px;color:#000">0,00 %</div>
<div class="c r" style="left:1056px;top:409px;width:71px;color:#000">0,00</div>
<div class="c r" style="left:1128px;top:409px;width:68px;color:#000">77,59</div>
<div class="c r" style="left:1197px;top:409px;width:61px;color:#000">5,00 $</div>
<div class="c u" style="left:1259px;top:409px;width:34px;color:#000">ft2</div>
<div class="c r" style="left:1294px;top:409px;width:66px;color:#000">4 500,00 $</div>
<div class="vl" style="left:98px;top:409px;height:19px;background:#e6e6e6"></div>
<div class="vl" style="left:146px;top:409px;height:19px;background:#e6e6e6"></div>
<div class="vl" style="left:230px;top:409px;height:19px;background:#e6e6e6"></div>
<div class="vl" style="left:508px;top:409px;height:19px;background:#e6e6e6"></div>
<div class="vl" style="left:740px;top:409px;height:19px;background:#e6e6e6"></div>
<div class="vl" style="left:812px;top:409px;height:19px;background:#e6e6e6"></div>
<div class="vl" style="left:844px;top:409px;height:19px;background:#e6e6e6"></div>
<div class="vl" style="left:890px;top:409px;height:19px;background:#e6e6e6"></div>
<div class="vl" style="left:938px;top:409px;height:19px;background:#e6e6e6"></div>
<div class="vl" style="left:998px;top:409px;height:19px;background:#e6e6e6"></div>
<div class="vl" style="left:1055px;top:409px;height:19px;background:#e6e6e6"></div>
<div class="vl" style="left:1127px;top:409px;height:19px;background:#e6e6e6"></div>
<div class="vl" style="left:1196px;top:409px;height:19px;background:#e6e6e6"></div>
<div class="vl" style="left:1258px;top:409px;height:19px;background:#e6e6e6"></div>
<div class="vl" style="left:1293px;top:409px;height:19px;background:#e6e6e6"></div>
<div class="a" style="left:48px;top:448px;width:21px;height:1px;background:#9a9a9a"></div>
<div class="a" style="left:69px;top:448px;width:1291px;height:1px;background:#ececec"></div>
<div class="eb" style="left:81px;top:429px"><i></i><b></b></div>
<div class="eb" style="left:723px;top:429px"><i></i><b></b></div>
<div class="c" style="left:99px;top:429px;width:47px;color:#000">102248</div>
<div class="c" style="left:147px;top:429px;width:83px;color:#000">06T</div>
<div class="c n" style="left:231px;top:429px;width:277px;color:#000">Lab - Interior Partition Wood Framing (ft)</div>
<div class="c n cp" style="left:509px;top:429px;width:214px;color:#000">Carpenter-Joiner</div>
<div class="c r" style="left:741px;top:429px;width:71px;color:#000">100,00</div>
<div class="c u" style="left:813px;top:429px;width:31px;color:#000">ft</div>
<div class="c r" style="left:845px;top:429px;width:45px;color:#000">32,50</div>
<div class="c r" style="left:891px;top:429px;width:47px;color:#000">0,00 %</div>
<div class="c r" style="left:939px;top:429px;width:59px;color:#000">0,00</div>
<div class="c r" style="left:999px;top:429px;width:56px;color:#000">0,00 %</div>
<div class="c r" style="left:1056px;top:429px;width:71px;color:#000">0,00</div>
<div class="c r" style="left:1128px;top:429px;width:68px;color:#000">32,50</div>
<div class="c r" style="left:1197px;top:429px;width:61px;color:#000">18,85 $</div>
<div class="c u" style="left:1259px;top:429px;width:34px;color:#000">ft</div>
<div class="c r" style="left:1294px;top:429px;width:66px;color:#000">1 885,00 $</div>
<div class="vl" style="left:98px;top:429px;height:19px;background:#e6e6e6"></div>
<div class="vl" style="left:146px;top:429px;height:19px;background:#e6e6e6"></div>
<div class="vl" style="left:230px;top:429px;height:19px;background:#e6e6e6"></div>
<div class="vl" style="left:508px;top:429px;height:19px;background:#e6e6e6"></div>
<div class="vl" style="left:740px;top:429px;height:19px;background:#e6e6e6"></div>
<div class="vl" style="left:812px;top:429px;height:19px;background:#e6e6e6"></div>
<div class="vl" style="left:844px;top:429px;height:19px;background:#e6e6e6"></div>
<div class="vl" style="left:890px;top:429px;height:19px;background:#e6e6e6"></div>
<div class="vl" style="left:938px;top:429px;height:19px;background:#e6e6e6"></div>
<div class="vl" style="left:998px;top:429px;height:19px;background:#e6e6e6"></div>
<div class="vl" style="left:1055px;top:429px;height:19px;background:#e6e6e6"></div>
<div class="vl" style="left:1127px;top:429px;height:19px;background:#e6e6e6"></div>
<div class="vl" style="left:1196px;top:429px;height:19px;background:#e6e6e6"></div>
<div class="vl" style="left:1258px;top:429px;height:19px;background:#e6e6e6"></div>
<div class="vl" style="left:1293px;top:429px;height:19px;background:#e6e6e6"></div>
<div class="a" style="left:48px;top:468px;width:21px;height:1px;background:#9a9a9a"></div>
<div class="a" style="left:69px;top:468px;width:1291px;height:1px;background:#ececec"></div>
<div class="eb" style="left:81px;top:449px"><i></i><b></b></div>
<div class="eb" style="left:723px;top:449px"><i></i><b></b></div>
<div class="c" style="left:99px;top:449px;width:47px;color:#000">102898</div>
<div class="c" style="left:147px;top:449px;width:83px;color:#000">06T</div>
<div class="c n" style="left:231px;top:449px;width:277px;color:#000">Lab - Wall Strapping H &amp; V (ft2)</div>
<div class="c n cp" style="left:509px;top:449px;width:214px;color:#000">Carpenter-Joiner</div>
<div class="c r" style="left:741px;top:449px;width:71px;color:#000">2 500,00</div>
<div class="c u" style="left:813px;top:449px;width:31px;color:#000">ft2</div>
<div class="c r" style="left:845px;top:449px;width:45px;color:#000">25,00</div>
<div class="c r" style="left:891px;top:449px;width:47px;color:#000">0,00 %</div>
<div class="c r" style="left:939px;top:449px;width:59px;color:#000">0,00</div>
<div class="c r" style="left:999px;top:449px;width:56px;color:#000">0,00 %</div>
<div class="c r" style="left:1056px;top:449px;width:71px;color:#000">0,00</div>
<div class="c r" style="left:1128px;top:449px;width:68px;color:#000">25,00</div>
<div class="c r" style="left:1197px;top:449px;width:61px;color:#000">0,58 $</div>
<div class="c u" style="left:1259px;top:449px;width:34px;color:#000">ft2</div>
<div class="c r" style="left:1294px;top:449px;width:66px;color:#000">1 450,00 $</div>
<div class="vl" style="left:98px;top:449px;height:19px;background:#e6e6e6"></div>
<div class="vl" style="left:146px;top:449px;height:19px;background:#e6e6e6"></div>
<div class="vl" style="left:230px;top:449px;height:19px;background:#e6e6e6"></div>
<div class="vl" style="left:508px;top:449px;height:19px;background:#e6e6e6"></div>
<div class="vl" style="left:740px;top:449px;height:19px;background:#e6e6e6"></div>
<div class="vl" style="left:812px;top:449px;height:19px;background:#e6e6e6"></div>
<div class="vl" style="left:844px;top:449px;height:19px;background:#e6e6e6"></div>
<div class="vl" style="left:890px;top:449px;height:19px;background:#e6e6e6"></div>
<div class="vl" style="left:938px;top:449px;height:19px;background:#e6e6e6"></div>
<div class="vl" style="left:998px;top:449px;height:19px;background:#e6e6e6"></div>
<div class="vl" style="left:1055px;top:449px;height:19px;background:#e6e6e6"></div>
<div class="vl" style="left:1127px;top:449px;height:19px;background:#e6e6e6"></div>
<div class="vl" style="left:1196px;top:449px;height:19px;background:#e6e6e6"></div>
<div class="vl" style="left:1258px;top:449px;height:19px;background:#e6e6e6"></div>
<div class="vl" style="left:1293px;top:449px;height:19px;background:#e6e6e6"></div>
<div class="a" style="left:48px;top:488px;width:21px;height:1px;background:#9a9a9a"></div>
<div class="a" style="left:69px;top:488px;width:1291px;height:1px;background:#ececec"></div>
<div class="eb" style="left:81px;top:469px"><i></i><b></b></div>
<div class="eb" style="left:723px;top:469px"><i></i><b></b></div>
<div class="c" style="left:99px;top:469px;width:47px;color:#000">107732</div>
<div class="c" style="left:147px;top:469px;width:83px;color:#000">09T</div>
<div class="c n" style="left:231px;top:469px;width:277px;color:#000">Lab - Ceiling Gypsum Installation (ft2)</div>
<div class="c n cp" style="left:509px;top:469px;width:214px;color:#000">Carpenter-Joiner</div>
<div class="c r" style="left:741px;top:469px;width:71px;color:#000">2 500,00</div>
<div class="c u" style="left:813px;top:469px;width:31px;color:#000">ft2</div>
<div class="c r" style="left:845px;top:469px;width:45px;color:#000">21,61</div>
<div class="c r" style="left:891px;top:469px;width:47px;color:#000">0,00 %</div>
<div class="c r" style="left:939px;top:469px;width:59px;color:#000">0,00</div>
<div class="c r" style="left:999px;top:469px;width:56px;color:#000">0,00 %</div>
<div class="c r" style="left:1056px;top:469px;width:71px;color:#000">0,00</div>
<div class="c r" style="left:1128px;top:469px;width:68px;color:#000">21,61</div>
<div class="c r" style="left:1197px;top:469px;width:61px;color:#000">0,50 $</div>
<div class="c u" style="left:1259px;top:469px;width:34px;color:#000">ft2</div>
<div class="c r" style="left:1294px;top:469px;width:66px;color:#000">1 253,65 $</div>
<div class="vl" style="left:98px;top:469px;height:19px;background:#e6e6e6"></div>
<div class="vl" style="left:146px;top:469px;height:19px;background:#e6e6e6"></div>
<div class="vl" style="left:230px;top:469px;height:19px;background:#e6e6e6"></div>
<div class="vl" style="left:508px;top:469px;height:19px;background:#e6e6e6"></div>
<div class="vl" style="left:740px;top:469px;height:19px;background:#e6e6e6"></div>
<div class="vl" style="left:812px;top:469px;height:19px;background:#e6e6e6"></div>
<div class="vl" style="left:844px;top:469px;height:19px;background:#e6e6e6"></div>
<div class="vl" style="left:890px;top:469px;height:19px;background:#e6e6e6"></div>
<div class="vl" style="left:938px;top:469px;height:19px;background:#e6e6e6"></div>
<div class="vl" style="left:998px;top:469px;height:19px;background:#e6e6e6"></div>
<div class="vl" style="left:1055px;top:469px;height:19px;background:#e6e6e6"></div>
<div class="vl" style="left:1127px;top:469px;height:19px;background:#e6e6e6"></div>
<div class="vl" style="left:1196px;top:469px;height:19px;background:#e6e6e6"></div>
<div class="vl" style="left:1258px;top:469px;height:19px;background:#e6e6e6"></div>
<div class="vl" style="left:1293px;top:469px;height:19px;background:#e6e6e6"></div>
<div class="a" style="left:48px;top:508px;width:21px;height:1px;background:#9a9a9a"></div>
<div class="a" style="left:69px;top:508px;width:1291px;height:1px;background:#ececec"></div>
<div class="eb" style="left:81px;top:489px"><i></i><b></b></div>
<div class="eb" style="left:723px;top:489px"><i></i><b></b></div>
<div class="c" style="left:99px;top:489px;width:47px;color:#000">104399</div>
<div class="c" style="left:147px;top:489px;width:83px;color:#000">06T</div>
<div class="c n" style="left:231px;top:489px;width:277px;color:#000">Lab - Frame Moulding Installation (ft)</div>
<div class="c n cp" style="left:509px;top:489px;width:214px;color:#000">Carpenter-Joiner</div>
<div class="c r" style="left:741px;top:489px;width:71px;color:#000">504,17</div>
<div class="c u" style="left:813px;top:489px;width:31px;color:#000">ft</div>
<div class="c r" style="left:845px;top:489px;width:45px;color:#000">21,01</div>
<div class="c r" style="left:891px;top:489px;width:47px;color:#000">0,00 %</div>
<div class="c r" style="left:939px;top:489px;width:59px;color:#000">0,00</div>
<div class="c r" style="left:999px;top:489px;width:56px;color:#000">0,00 %</div>
<div class="c r" style="left:1056px;top:489px;width:71px;color:#000">0,00</div>
<div class="c r" style="left:1128px;top:489px;width:68px;color:#000">21,01</div>
<div class="c r" style="left:1197px;top:489px;width:61px;color:#000">2,42 $</div>
<div class="c u" style="left:1259px;top:489px;width:34px;color:#000">ft</div>
<div class="c r" style="left:1294px;top:489px;width:66px;color:#000">1 218,40 $</div>
<div class="vl" style="left:98px;top:489px;height:19px;background:#e6e6e6"></div>
<div class="vl" style="left:146px;top:489px;height:19px;background:#e6e6e6"></div>
<div class="vl" style="left:230px;top:489px;height:19px;background:#e6e6e6"></div>
<div class="vl" style="left:508px;top:489px;height:19px;background:#e6e6e6"></div>
<div class="vl" style="left:740px;top:489px;height:19px;background:#e6e6e6"></div>
<div class="vl" style="left:812px;top:489px;height:19px;background:#e6e6e6"></div>
<div class="vl" style="left:844px;top:489px;height:19px;background:#e6e6e6"></div>
<div class="vl" style="left:890px;top:489px;height:19px;background:#e6e6e6"></div>
<div class="vl" style="left:938px;top:489px;height:19px;background:#e6e6e6"></div>
<div class="vl" style="left:998px;top:489px;height:19px;background:#e6e6e6"></div>
<div class="vl" style="left:1055px;top:489px;height:19px;background:#e6e6e6"></div>
<div class="vl" style="left:1127px;top:489px;height:19px;background:#e6e6e6"></div>
<div class="vl" style="left:1196px;top:489px;height:19px;background:#e6e6e6"></div>
<div class="vl" style="left:1258px;top:489px;height:19px;background:#e6e6e6"></div>
<div class="vl" style="left:1293px;top:489px;height:19px;background:#e6e6e6"></div>
<div class="a" style="left:48px;top:528px;width:21px;height:1px;background:#9a9a9a"></div>
<div class="a" style="left:69px;top:528px;width:1291px;height:1px;background:#ececec"></div>
<div class="eb" style="left:81px;top:509px"><i></i><b></b></div>
<div class="eb" style="left:723px;top:509px"><i></i><b></b></div>
<div class="c" style="left:99px;top:509px;width:47px;color:#000">107796</div>
<div class="c" style="left:147px;top:509px;width:83px;color:#000">03T</div>
<div class="c n" style="left:231px;top:509px;width:277px;color:#000">LAB - REBAR Installation Slab (ft2)</div>
<div class="c n cp" style="left:509px;top:509px;width:214px;color:#000">Carpenter-Joiner</div>
<div class="c r" style="left:741px;top:509px;width:71px;color:#000">1 400,00</div>
<div class="c u" style="left:813px;top:509px;width:31px;color:#000">ft2</div>
<div class="c r" style="left:845px;top:509px;width:45px;color:#000">18,67</div>
<div class="c r" style="left:891px;top:509px;width:47px;color:#000">0,00 %</div>
<div class="c r" style="left:939px;top:509px;width:59px;color:#000">0,00</div>
<div class="c r" style="left:999px;top:509px;width:56px;color:#000">0,00 %</div>
<div class="c r" style="left:1056px;top:509px;width:71px;color:#000">0,00</div>
<div class="c r" style="left:1128px;top:509px;width:68px;color:#000">18,67</div>
<div class="c r" style="left:1197px;top:509px;width:61px;color:#000">0,77 $</div>
<div class="c u" style="left:1259px;top:509px;width:34px;color:#000">ft2</div>
<div class="c r" style="left:1294px;top:509px;width:66px;color:#000">1 082,67 $</div>
<div class="vl" style="left:98px;top:509px;height:19px;background:#e6e6e6"></div>
<div class="vl" style="left:146px;top:509px;height:19px;background:#e6e6e6"></div>
<div class="vl" style="left:230px;top:509px;height:19px;background:#e6e6e6"></div>
<div class="vl" style="left:508px;top:509px;height:19px;background:#e6e6e6"></div>
<div class="vl" style="left:740px;top:509px;height:19px;background:#e6e6e6"></div>
<div class="vl" style="left:812px;top:509px;height:19px;background:#e6e6e6"></div>
<div class="vl" style="left:844px;top:509px;height:19px;background:#e6e6e6"></div>
<div class="vl" style="left:890px;top:509px;height:19px;background:#e6e6e6"></div>
<div class="vl" style="left:938px;top:509px;height:19px;background:#e6e6e6"></div>
<div class="vl" style="left:998px;top:509px;height:19px;background:#e6e6e6"></div>
<div class="vl" style="left:1055px;top:509px;height:19px;background:#e6e6e6"></div>
<div class="vl" style="left:1127px;top:509px;height:19px;background:#e6e6e6"></div>
<div class="vl" style="left:1196px;top:509px;height:19px;background:#e6e6e6"></div>
<div class="vl" style="left:1258px;top:509px;height:19px;background:#e6e6e6"></div>
<div class="vl" style="left:1293px;top:509px;height:19px;background:#e6e6e6"></div>
<div class="a" style="left:48px;top:548px;width:21px;height:1px;background:#9a9a9a"></div>
<div class="a" style="left:69px;top:548px;width:1291px;height:1px;background:#ececec"></div>
<div class="eb" style="left:81px;top:529px"><i></i><b></b></div>
<div class="eb" style="left:723px;top:529px"><i></i><b></b></div>
<div class="c" style="left:99px;top:529px;width:47px;color:#000">102256</div>
<div class="c" style="left:147px;top:529px;width:83px;color:#000">07T</div>
<div class="c n" style="left:231px;top:529px;width:277px;color:#000">Lab - Partition Batts Insulation Installation (ft2)</div>
<div class="c n cp" style="left:509px;top:529px;width:214px;color:#000">Carpenter-Joiner</div>
<div class="c r" style="left:741px;top:529px;width:71px;color:#000">3 400,00</div>
<div class="c u" style="left:813px;top:529px;width:31px;color:#000">ft2</div>
<div class="c r" style="left:845px;top:529px;width:45px;color:#000">17,00</div>
<div class="c r" style="left:891px;top:529px;width:47px;color:#000">0,00 %</div>
<div class="c r" style="left:939px;top:529px;width:59px;color:#000">0,00</div>
<div class="c r" style="left:999px;top:529px;width:56px;color:#000">0,00 %</div>
<div class="c r" style="left:1056px;top:529px;width:71px;color:#000">0,00</div>
<div class="c r" style="left:1128px;top:529px;width:68px;color:#000">17,00</div>
<div class="c r" style="left:1197px;top:529px;width:61px;color:#000">0,29 $</div>
<div class="c u" style="left:1259px;top:529px;width:34px;color:#000">ft2</div>
<div class="c r" style="left:1294px;top:529px;width:66px;color:#000">986,00 $</div>
<div class="vl" style="left:98px;top:529px;height:19px;background:#e6e6e6"></div>
<div class="vl" style="left:146px;top:529px;height:19px;background:#e6e6e6"></div>
<div class="vl" style="left:230px;top:529px;height:19px;background:#e6e6e6"></div>
<div class="vl" style="left:508px;top:529px;height:19px;background:#e6e6e6"></div>
<div class="vl" style="left:740px;top:529px;height:19px;background:#e6e6e6"></div>
<div class="vl" style="left:812px;top:529px;height:19px;background:#e6e6e6"></div>
<div class="vl" style="left:844px;top:529px;height:19px;background:#e6e6e6"></div>
<div class="vl" style="left:890px;top:529px;height:19px;background:#e6e6e6"></div>
<div class="vl" style="left:938px;top:529px;height:19px;background:#e6e6e6"></div>
<div class="vl" style="left:998px;top:529px;height:19px;background:#e6e6e6"></div>
<div class="vl" style="left:1055px;top:529px;height:19px;background:#e6e6e6"></div>
<div class="vl" style="left:1127px;top:529px;height:19px;background:#e6e6e6"></div>
<div class="vl" style="left:1196px;top:529px;height:19px;background:#e6e6e6"></div>
<div class="vl" style="left:1258px;top:529px;height:19px;background:#e6e6e6"></div>
<div class="vl" style="left:1293px;top:529px;height:19px;background:#e6e6e6"></div>
<div class="a" style="left:48px;top:568px;width:21px;height:1px;background:#9a9a9a"></div>
<div class="a" style="left:69px;top:568px;width:1291px;height:1px;background:#ececec"></div>
<div class="eb" style="left:81px;top:549px"><i></i><b></b></div>
<div class="eb" style="left:723px;top:549px"><i></i><b></b></div>
<div class="c" style="left:99px;top:549px;width:47px;color:#000">105554</div>
<div class="c" style="left:147px;top:549px;width:83px;color:#000">08T</div>
<div class="c n" style="left:231px;top:549px;width:277px;color:#000">Lab - Exterior Doors Installation (Unit)</div>
<div class="c n cp" style="left:509px;top:549px;width:214px;color:#000">Carpenter-Joiner</div>
<div class="c r" style="left:741px;top:549px;width:71px;color:#000">3,00</div>
<div class="c u" style="left:813px;top:549px;width:31px;color:#000">unit</div>
<div class="c r" style="left:845px;top:549px;width:45px;color:#000">15,00</div>
<div class="c r" style="left:891px;top:549px;width:47px;color:#000">0,00 %</div>
<div class="c r" style="left:939px;top:549px;width:59px;color:#000">0,00</div>
<div class="c r" style="left:999px;top:549px;width:56px;color:#000">0,00 %</div>
<div class="c r" style="left:1056px;top:549px;width:71px;color:#000">0,00</div>
<div class="c r" style="left:1128px;top:549px;width:68px;color:#000">15,00</div>
<div class="c r" style="left:1197px;top:549px;width:61px;color:#000">290,00 $</div>
<div class="c u" style="left:1259px;top:549px;width:34px;color:#000">unit</div>
<div class="c r" style="left:1294px;top:549px;width:66px;color:#000">870,00 $</div>
<div class="vl" style="left:98px;top:549px;height:19px;background:#e6e6e6"></div>
<div class="vl" style="left:146px;top:549px;height:19px;background:#e6e6e6"></div>
<div class="vl" style="left:230px;top:549px;height:19px;background:#e6e6e6"></div>
<div class="vl" style="left:508px;top:549px;height:19px;background:#e6e6e6"></div>
<div class="vl" style="left:740px;top:549px;height:19px;background:#e6e6e6"></div>
<div class="vl" style="left:812px;top:549px;height:19px;background:#e6e6e6"></div>
<div class="vl" style="left:844px;top:549px;height:19px;background:#e6e6e6"></div>
<div class="vl" style="left:890px;top:549px;height:19px;background:#e6e6e6"></div>
<div class="vl" style="left:938px;top:549px;height:19px;background:#e6e6e6"></div>
<div class="vl" style="left:998px;top:549px;height:19px;background:#e6e6e6"></div>
<div class="vl" style="left:1055px;top:549px;height:19px;background:#e6e6e6"></div>
<div class="vl" style="left:1127px;top:549px;height:19px;background:#e6e6e6"></div>
<div class="vl" style="left:1196px;top:549px;height:19px;background:#e6e6e6"></div>
<div class="vl" style="left:1258px;top:549px;height:19px;background:#e6e6e6"></div>
<div class="vl" style="left:1293px;top:549px;height:19px;background:#e6e6e6"></div>
<div class="a" style="left:48px;top:588px;width:21px;height:1px;background:#9a9a9a"></div>
<div class="a" style="left:69px;top:588px;width:1291px;height:1px;background:#ececec"></div>
<div class="eb" style="left:81px;top:569px"><i></i><b></b></div>
<div class="eb" style="left:723px;top:569px"><i></i><b></b></div>
<div class="c" style="left:99px;top:569px;width:47px;color:#000">107871</div>
<div class="c" style="left:147px;top:569px;width:83px;color:#000">09T</div>
<div class="c n" style="left:231px;top:569px;width:277px;color:#000">LAB - Ceiling Joint Puller &amp; Plasterer (ft2)</div>
<div class="c n cp" style="left:509px;top:569px;width:214px;color:#000">Carpenter-Joiner</div>
<div class="c r" style="left:741px;top:569px;width:71px;color:#000">2 500,00</div>
<div class="c u" style="left:813px;top:569px;width:31px;color:#000">ft2</div>
<div class="c r" style="left:845px;top:569px;width:45px;color:#000">15,00</div>
<div class="c r" style="left:891px;top:569px;width:47px;color:#000">0,00 %</div>
<div class="c r" style="left:939px;top:569px;width:59px;color:#000">0,00</div>
<div class="c r" style="left:999px;top:569px;width:56px;color:#000">0,00 %</div>
<div class="c r" style="left:1056px;top:569px;width:71px;color:#000">0,00</div>
<div class="c r" style="left:1128px;top:569px;width:68px;color:#000">15,00</div>
<div class="c r" style="left:1197px;top:569px;width:61px;color:#000">0,35 $</div>
<div class="c u" style="left:1259px;top:569px;width:34px;color:#000">ft2</div>
<div class="c r" style="left:1294px;top:569px;width:66px;color:#000">869,98 $</div>
<div class="vl" style="left:98px;top:569px;height:19px;background:#e6e6e6"></div>
<div class="vl" style="left:146px;top:569px;height:19px;background:#e6e6e6"></div>
<div class="vl" style="left:230px;top:569px;height:19px;background:#e6e6e6"></div>
<div class="vl" style="left:508px;top:569px;height:19px;background:#e6e6e6"></div>
<div class="vl" style="left:740px;top:569px;height:19px;background:#e6e6e6"></div>
<div class="vl" style="left:812px;top:569px;height:19px;background:#e6e6e6"></div>
<div class="vl" style="left:844px;top:569px;height:19px;background:#e6e6e6"></div>
<div class="vl" style="left:890px;top:569px;height:19px;background:#e6e6e6"></div>
<div class="vl" style="left:938px;top:569px;height:19px;background:#e6e6e6"></div>
<div class="vl" style="left:998px;top:569px;height:19px;background:#e6e6e6"></div>
<div class="vl" style="left:1055px;top:569px;height:19px;background:#e6e6e6"></div>
<div class="vl" style="left:1127px;top:569px;height:19px;background:#e6e6e6"></div>
<div class="vl" style="left:1196px;top:569px;height:19px;background:#e6e6e6"></div>
<div class="vl" style="left:1258px;top:569px;height:19px;background:#e6e6e6"></div>
<div class="vl" style="left:1293px;top:569px;height:19px;background:#e6e6e6"></div>
<div class="a" style="left:48px;top:608px;width:21px;height:1px;background:#9a9a9a"></div>
<div class="a" style="left:69px;top:608px;width:1291px;height:1px;background:#ececec"></div>
<div class="eb" style="left:81px;top:589px"><i></i><b></b></div>
<div class="eb" style="left:723px;top:589px"><i></i><b></b></div>
<div class="c" style="left:99px;top:589px;width:47px;color:#000">107904</div>
<div class="c" style="left:147px;top:589px;width:83px;color:#000">03T</div>
<div class="c n" style="left:231px;top:589px;width:277px;color:#000">LAB - Formwork footings (lin/ft)</div>
<div class="c n cp" style="left:509px;top:589px;width:214px;color:#000">Carpenter-Joiner</div>
<div class="c r" style="left:741px;top:589px;width:71px;color:#000">204,00</div>
<div class="c u" style="left:813px;top:589px;width:31px;color:#000">ft</div>
<div class="c r" style="left:845px;top:589px;width:45px;color:#000">13,60</div>
<div class="c r" style="left:891px;top:589px;width:47px;color:#000">0,00 %</div>
<div class="c r" style="left:939px;top:589px;width:59px;color:#000">0,00</div>
<div class="c r" style="left:999px;top:589px;width:56px;color:#000">0,00 %</div>
<div class="c r" style="left:1056px;top:589px;width:71px;color:#000">0,00</div>
<div class="c r" style="left:1128px;top:589px;width:68px;color:#000">13,60</div>
<div class="c r" style="left:1197px;top:589px;width:61px;color:#000">3,87 $</div>
<div class="c u" style="left:1259px;top:589px;width:34px;color:#000">ft</div>
<div class="c r" style="left:1294px;top:589px;width:66px;color:#000">788,80 $</div>
<div class="vl" style="left:98px;top:589px;height:19px;background:#e6e6e6"></div>
<div class="vl" style="left:146px;top:589px;height:19px;background:#e6e6e6"></div>
<div class="vl" style="left:230px;top:589px;height:19px;background:#e6e6e6"></div>
<div class="vl" style="left:508px;top:589px;height:19px;background:#e6e6e6"></div>
<div class="vl" style="left:740px;top:589px;height:19px;background:#e6e6e6"></div>
<div class="vl" style="left:812px;top:589px;height:19px;background:#e6e6e6"></div>
<div class="vl" style="left:844px;top:589px;height:19px;background:#e6e6e6"></div>
<div class="vl" style="left:890px;top:589px;height:19px;background:#e6e6e6"></div>
<div class="vl" style="left:938px;top:589px;height:19px;background:#e6e6e6"></div>
<div class="vl" style="left:998px;top:589px;height:19px;background:#e6e6e6"></div>
<div class="vl" style="left:1055px;top:589px;height:19px;background:#e6e6e6"></div>
<div class="vl" style="left:1127px;top:589px;height:19px;background:#e6e6e6"></div>
<div class="vl" style="left:1196px;top:589px;height:19px;background:#e6e6e6"></div>
<div class="vl" style="left:1258px;top:589px;height:19px;background:#e6e6e6"></div>
<div class="vl" style="left:1293px;top:589px;height:19px;background:#e6e6e6"></div>
<div class="a" style="left:48px;top:628px;width:21px;height:1px;background:#9a9a9a"></div>
<div class="a" style="left:69px;top:628px;width:1291px;height:1px;background:#ececec"></div>
<div class="eb" style="left:81px;top:609px"><i></i><b></b></div>
<div class="eb" style="left:723px;top:609px"><i></i><b></b></div>
<div class="c" style="left:99px;top:609px;width:47px;color:#000">107868</div>
<div class="c" style="left:147px;top:609px;width:83px;color:#000">09T</div>
<div class="c n" style="left:231px;top:609px;width:277px;color:#000">LAB - Wall Joint Puller &amp; Plasterer (ft2)</div>
<div class="c n cp" style="left:509px;top:609px;width:214px;color:#000">Carpenter-Joiner</div>
<div class="c r" style="left:741px;top:609px;width:71px;color:#000">1 800,00</div>
<div class="c u" style="left:813px;top:609px;width:31px;color:#000">ft2</div>
<div class="c r" style="left:845px;top:609px;width:45px;color:#000">10,80</div>
<div class="c r" style="left:891px;top:609px;width:47px;color:#000">0,00 %</div>
<div class="c r" style="left:939px;top:609px;width:59px;color:#000">0,00</div>
<div class="c r" style="left:999px;top:609px;width:56px;color:#000">0,00 %</div>
<div class="c r" style="left:1056px;top:609px;width:71px;color:#000">0,00</div>
<div class="c r" style="left:1128px;top:609px;width:68px;color:#000">10,80</div>
<div class="c r" style="left:1197px;top:609px;width:61px;color:#000">0,35 $</div>
<div class="c u" style="left:1259px;top:609px;width:34px;color:#000">ft2</div>
<div class="c r" style="left:1294px;top:609px;width:66px;color:#000">626,40 $</div>
<div class="vl" style="left:98px;top:609px;height:19px;background:#e6e6e6"></div>
<div class="vl" style="left:146px;top:609px;height:19px;background:#e6e6e6"></div>
<div class="vl" style="left:230px;top:609px;height:19px;background:#e6e6e6"></div>
<div class="vl" style="left:508px;top:609px;height:19px;background:#e6e6e6"></div>
<div class="vl" style="left:740px;top:609px;height:19px;background:#e6e6e6"></div>
<div class="vl" style="left:812px;top:609px;height:19px;background:#e6e6e6"></div>
<div class="vl" style="left:844px;top:609px;height:19px;background:#e6e6e6"></div>
<div class="vl" style="left:890px;top:609px;height:19px;background:#e6e6e6"></div>
<div class="vl" style="left:938px;top:609px;height:19px;background:#e6e6e6"></div>
<div class="vl" style="left:998px;top:609px;height:19px;background:#e6e6e6"></div>
<div class="vl" style="left:1055px;top:609px;height:19px;background:#e6e6e6"></div>
<div class="vl" style="left:1127px;top:609px;height:19px;background:#e6e6e6"></div>
<div class="vl" style="left:1196px;top:609px;height:19px;background:#e6e6e6"></div>
<div class="vl" style="left:1258px;top:609px;height:19px;background:#e6e6e6"></div>
<div class="vl" style="left:1293px;top:609px;height:19px;background:#e6e6e6"></div>
<div class="a" style="left:48px;top:648px;width:21px;height:1px;background:#9a9a9a"></div>
<div class="a" style="left:69px;top:648px;width:1291px;height:1px;background:#ececec"></div>
<div class="eb" style="left:81px;top:629px"><i></i><b></b></div>
<div class="eb" style="left:723px;top:629px"><i></i><b></b></div>
<div class="c" style="left:99px;top:629px;width:47px;color:#000">105556</div>
<div class="c" style="left:147px;top:629px;width:83px;color:#000">08T</div>
<div class="c n" style="left:231px;top:629px;width:277px;color:#000">Lab - Exterior Window &amp; Insulation Installation (Unit)</div>
<div class="c n cp" style="left:509px;top:629px;width:214px;color:#000">Carpenter-Joiner</div>
<div class="c r" style="left:741px;top:629px;width:71px;color:#000">9,00</div>
<div class="c u" style="left:813px;top:629px;width:31px;color:#000">unit</div>
<div class="c r" style="left:845px;top:629px;width:45px;color:#000">9,00</div>
<div class="c r" style="left:891px;top:629px;width:47px;color:#000">0,00 %</div>
<div class="c r" style="left:939px;top:629px;width:59px;color:#000">0,00</div>
<div class="c r" style="left:999px;top:629px;width:56px;color:#000">0,00 %</div>
<div class="c r" style="left:1056px;top:629px;width:71px;color:#000">0,00</div>
<div class="c r" style="left:1128px;top:629px;width:68px;color:#000">9,00</div>
<div class="c r" style="left:1197px;top:629px;width:61px;color:#000">58,00 $</div>
<div class="c u" style="left:1259px;top:629px;width:34px;color:#000">unit</div>
<div class="c r" style="left:1294px;top:629px;width:66px;color:#000">522,00 $</div>
<div class="vl" style="left:98px;top:629px;height:19px;background:#e6e6e6"></div>
<div class="vl" style="left:146px;top:629px;height:19px;background:#e6e6e6"></div>
<div class="vl" style="left:230px;top:629px;height:19px;background:#e6e6e6"></div>
<div class="vl" style="left:508px;top:629px;height:19px;background:#e6e6e6"></div>
<div class="vl" style="left:740px;top:629px;height:19px;background:#e6e6e6"></div>
<div class="vl" style="left:812px;top:629px;height:19px;background:#e6e6e6"></div>
<div class="vl" style="left:844px;top:629px;height:19px;background:#e6e6e6"></div>
<div class="vl" style="left:890px;top:629px;height:19px;background:#e6e6e6"></div>
<div class="vl" style="left:938px;top:629px;height:19px;background:#e6e6e6"></div>
<div class="vl" style="left:998px;top:629px;height:19px;background:#e6e6e6"></div>
<div class="vl" style="left:1055px;top:629px;height:19px;background:#e6e6e6"></div>
<div class="vl" style="left:1127px;top:629px;height:19px;background:#e6e6e6"></div>
<div class="vl" style="left:1196px;top:629px;height:19px;background:#e6e6e6"></div>
<div class="vl" style="left:1258px;top:629px;height:19px;background:#e6e6e6"></div>
<div class="vl" style="left:1293px;top:629px;height:19px;background:#e6e6e6"></div>
<div class="a" style="left:48px;top:668px;width:21px;height:1px;background:#9a9a9a"></div>
<div class="a" style="left:69px;top:668px;width:1291px;height:1px;background:#ececec"></div>
<div class="eb" style="left:81px;top:649px"><i></i><b></b></div>
<div class="eb" style="left:723px;top:649px"><i></i><b></b></div>
<div class="c" style="left:99px;top:649px;width:47px;color:#000">102254</div>
<div class="c" style="left:147px;top:649px;width:83px;color:#000">09T</div>
<div class="c n" style="left:231px;top:649px;width:277px;color:#000">Lab - Partition Gypsum Installation (ft2)</div>
<div class="c n cp" style="left:509px;top:649px;width:214px;color:#000">Carpenter-Joiner</div>
<div class="c r" style="left:741px;top:649px;width:71px;color:#000">900,00</div>
<div class="c u" style="left:813px;top:649px;width:31px;color:#000">ft2</div>
<div class="c r" style="left:845px;top:649px;width:45px;color:#000">9,00</div>
<div class="c r" style="left:891px;top:649px;width:47px;color:#000">0,00 %</div>
<div class="c r" style="left:939px;top:649px;width:59px;color:#000">0,00</div>
<div class="c r" style="left:999px;top:649px;width:56px;color:#000">0,00 %</div>
<div class="c r" style="left:1056px;top:649px;width:71px;color:#000">0,00</div>
<div class="c r" style="left:1128px;top:649px;width:68px;color:#000">9,00</div>
<div class="c r" style="left:1197px;top:649px;width:61px;color:#000">0,58 $</div>
<div class="c u" style="left:1259px;top:649px;width:34px;color:#000">ft2</div>
<div class="c r" style="left:1294px;top:649px;width:66px;color:#000">522,00 $</div>
<div class="vl" style="left:98px;top:649px;height:19px;background:#e6e6e6"></div>
<div class="vl" style="left:146px;top:649px;height:19px;background:#e6e6e6"></div>
<div class="vl" style="left:230px;top:649px;height:19px;background:#e6e6e6"></div>
<div class="vl" style="left:508px;top:649px;height:19px;background:#e6e6e6"></div>
<div class="vl" style="left:740px;top:649px;height:19px;background:#e6e6e6"></div>
<div class="vl" style="left:812px;top:649px;height:19px;background:#e6e6e6"></div>
<div class="vl" style="left:844px;top:649px;height:19px;background:#e6e6e6"></div>
<div class="vl" style="left:890px;top:649px;height:19px;background:#e6e6e6"></div>
<div class="vl" style="left:938px;top:649px;height:19px;background:#e6e6e6"></div>
<div class="vl" style="left:998px;top:649px;height:19px;background:#e6e6e6"></div>
<div class="vl" style="left:1055px;top:649px;height:19px;background:#e6e6e6"></div>
<div class="vl" style="left:1127px;top:649px;height:19px;background:#e6e6e6"></div>
<div class="vl" style="left:1196px;top:649px;height:19px;background:#e6e6e6"></div>
<div class="vl" style="left:1258px;top:649px;height:19px;background:#e6e6e6"></div>
<div class="vl" style="left:1293px;top:649px;height:19px;background:#e6e6e6"></div>
<div class="a" style="left:48px;top:688px;width:21px;height:1px;background:#9a9a9a"></div>
<div class="a" style="left:69px;top:688px;width:1291px;height:1px;background:#ececec"></div>
<div class="eb" style="left:81px;top:669px"><i></i><b></b></div>
<div class="eb" style="left:723px;top:669px"><i></i><b></b></div>
<div class="c" style="left:99px;top:669px;width:47px;color:#000">107939</div>
<div class="c" style="left:147px;top:669px;width:83px;color:#000">08T</div>
<div class="c n" style="left:231px;top:669px;width:277px;color:#000">LAB - Installation of Interior Doors (Unit)</div>
<div class="c n cp" style="left:509px;top:669px;width:214px;color:#000">Carpenter-Joiner</div>
<div class="c r" style="left:741px;top:669px;width:71px;color:#000">2,00</div>
<div class="c u" style="left:813px;top:669px;width:31px;color:#000">unit</div>
<div class="c r" style="left:845px;top:669px;width:45px;color:#000">8,00</div>
<div class="c r" style="left:891px;top:669px;width:47px;color:#000">0,00 %</div>
<div class="c r" style="left:939px;top:669px;width:59px;color:#000">0,00</div>
<div class="c r" style="left:999px;top:669px;width:56px;color:#000">0,00 %</div>
<div class="c r" style="left:1056px;top:669px;width:71px;color:#000">0,00</div>
<div class="c r" style="left:1128px;top:669px;width:68px;color:#000">8,00</div>
<div class="c r" style="left:1197px;top:669px;width:61px;color:#000">232,00 $</div>
<div class="c u" style="left:1259px;top:669px;width:34px;color:#000">unit</div>
<div class="c r" style="left:1294px;top:669px;width:66px;color:#000">464,00 $</div>
<div class="vl" style="left:98px;top:669px;height:19px;background:#e6e6e6"></div>
<div class="vl" style="left:146px;top:669px;height:19px;background:#e6e6e6"></div>
<div class="vl" style="left:230px;top:669px;height:19px;background:#e6e6e6"></div>
<div class="vl" style="left:508px;top:669px;height:19px;background:#e6e6e6"></div>
<div class="vl" style="left:740px;top:669px;height:19px;background:#e6e6e6"></div>
<div class="vl" style="left:812px;top:669px;height:19px;background:#e6e6e6"></div>
<div class="vl" style="left:844px;top:669px;height:19px;background:#e6e6e6"></div>
<div class="vl" style="left:890px;top:669px;height:19px;background:#e6e6e6"></div>
<div class="vl" style="left:938px;top:669px;height:19px;background:#e6e6e6"></div>
<div class="vl" style="left:998px;top:669px;height:19px;background:#e6e6e6"></div>
<div class="vl" style="left:1055px;top:669px;height:19px;background:#e6e6e6"></div>
<div class="vl" style="left:1127px;top:669px;height:19px;background:#e6e6e6"></div>
<div class="vl" style="left:1196px;top:669px;height:19px;background:#e6e6e6"></div>
<div class="vl" style="left:1258px;top:669px;height:19px;background:#e6e6e6"></div>
<div class="vl" style="left:1293px;top:669px;height:19px;background:#e6e6e6"></div>
<div class="a" style="left:48px;top:708px;width:21px;height:1px;background:#9a9a9a"></div>
<div class="a" style="left:69px;top:708px;width:1291px;height:1px;background:#ececec"></div>
<div class="eb" style="left:81px;top:689px"><i></i><b></b></div>
<div class="eb" style="left:723px;top:689px"><i></i><b></b></div>
<div class="c" style="left:99px;top:689px;width:47px;color:#000">104329</div>
<div class="c" style="left:147px;top:689px;width:83px;color:#000">09T</div>
<div class="c n" style="left:231px;top:689px;width:277px;color:#000">Lab - Vinyl Plinth Installation 4&#x27; (ft)</div>
<div class="c n cp" style="left:509px;top:689px;width:214px;color:#000">Soft Coating Apprentice Installer - période 1</div>
<div class="c r" style="left:741px;top:689px;width:71px;color:#000">200,00</div>
<div class="c u" style="left:813px;top:689px;width:31px;color:#000">ft</div>
<div class="c r" style="left:845px;top:689px;width:45px;color:#000">5,33</div>
<div class="c r" style="left:891px;top:689px;width:47px;color:#000">0,00 %</div>
<div class="c r" style="left:939px;top:689px;width:59px;color:#000">0,00</div>
<div class="c r" style="left:999px;top:689px;width:56px;color:#000">0,00 %</div>
<div class="c r" style="left:1056px;top:689px;width:71px;color:#000">0,00</div>
<div class="c r" style="left:1128px;top:689px;width:68px;color:#000">5,33</div>
<div class="c r" style="left:1197px;top:689px;width:61px;color:#000">2,00 $</div>
<div class="c u" style="left:1259px;top:689px;width:34px;color:#000">ft</div>
<div class="c r" style="left:1294px;top:689px;width:66px;color:#000">400,00 $</div>
<div class="vl" style="left:98px;top:689px;height:19px;background:#e6e6e6"></div>
<div class="vl" style="left:146px;top:689px;height:19px;background:#e6e6e6"></div>
<div class="vl" style="left:230px;top:689px;height:19px;background:#e6e6e6"></div>
<div class="vl" style="left:508px;top:689px;height:19px;background:#e6e6e6"></div>
<div class="vl" style="left:740px;top:689px;height:19px;background:#e6e6e6"></div>
<div class="vl" style="left:812px;top:689px;height:19px;background:#e6e6e6"></div>
<div class="vl" style="left:844px;top:689px;height:19px;background:#e6e6e6"></div>
<div class="vl" style="left:890px;top:689px;height:19px;background:#e6e6e6"></div>
<div class="vl" style="left:938px;top:689px;height:19px;background:#e6e6e6"></div>
<div class="vl" style="left:998px;top:689px;height:19px;background:#e6e6e6"></div>
<div class="vl" style="left:1055px;top:689px;height:19px;background:#e6e6e6"></div>
<div class="vl" style="left:1127px;top:689px;height:19px;background:#e6e6e6"></div>
<div class="vl" style="left:1196px;top:689px;height:19px;background:#e6e6e6"></div>
<div class="vl" style="left:1258px;top:689px;height:19px;background:#e6e6e6"></div>
<div class="vl" style="left:1293px;top:689px;height:19px;background:#e6e6e6"></div>
<div class="a" style="left:48px;top:728px;width:21px;height:1px;background:#9a9a9a"></div>
<div class="a" style="left:69px;top:728px;width:1291px;height:1px;background:#ececec"></div>
<div class="eb" style="left:81px;top:709px"><i></i><b></b></div>
<div class="eb" style="left:723px;top:709px"><i></i><b></b></div>
<div class="c" style="left:99px;top:709px;width:47px;color:#000">107800</div>
<div class="c" style="left:147px;top:709px;width:83px;color:#000">03T</div>
<div class="c n" style="left:231px;top:709px;width:277px;color:#000">LAB - SLAB FINISH (ft2)</div>
<div class="c n cp" style="left:509px;top:709px;width:214px;color:#000">Carpenter-Joiner</div>
<div class="c r" style="left:741px;top:709px;width:71px;color:#000">400,00</div>
<div class="c u" style="left:813px;top:709px;width:31px;color:#000">ft2</div>
<div class="c r" style="left:845px;top:709px;width:45px;color:#000">6,67</div>
<div class="c r" style="left:891px;top:709px;width:47px;color:#000">0,00 %</div>
<div class="c r" style="left:939px;top:709px;width:59px;color:#000">0,00</div>
<div class="c r" style="left:999px;top:709px;width:56px;color:#000">0,00 %</div>
<div class="c r" style="left:1056px;top:709px;width:71px;color:#000">0,00</div>
<div class="c r" style="left:1128px;top:709px;width:68px;color:#000">6,67</div>
<div class="c r" style="left:1197px;top:709px;width:61px;color:#000">0,97 $</div>
<div class="c u" style="left:1259px;top:709px;width:34px;color:#000">ft2</div>
<div class="c r" style="left:1294px;top:709px;width:66px;color:#000">386,67 $</div>
<div class="vl" style="left:98px;top:709px;height:19px;background:#e6e6e6"></div>
<div class="vl" style="left:146px;top:709px;height:19px;background:#e6e6e6"></div>
<div class="vl" style="left:230px;top:709px;height:19px;background:#e6e6e6"></div>
<div class="vl" style="left:508px;top:709px;height:19px;background:#e6e6e6"></div>
<div class="vl" style="left:740px;top:709px;height:19px;background:#e6e6e6"></div>
<div class="vl" style="left:812px;top:709px;height:19px;background:#e6e6e6"></div>
<div class="vl" style="left:844px;top:709px;height:19px;background:#e6e6e6"></div>
<div class="vl" style="left:890px;top:709px;height:19px;background:#e6e6e6"></div>
<div class="vl" style="left:938px;top:709px;height:19px;background:#e6e6e6"></div>
<div class="vl" style="left:998px;top:709px;height:19px;background:#e6e6e6"></div>
<div class="vl" style="left:1055px;top:709px;height:19px;background:#e6e6e6"></div>
<div class="vl" style="left:1127px;top:709px;height:19px;background:#e6e6e6"></div>
<div class="vl" style="left:1196px;top:709px;height:19px;background:#e6e6e6"></div>
<div class="vl" style="left:1258px;top:709px;height:19px;background:#e6e6e6"></div>
<div class="vl" style="left:1293px;top:709px;height:19px;background:#e6e6e6"></div>
<div class="a" style="left:48px;top:748px;width:21px;height:1px;background:#9a9a9a"></div>
<div class="a" style="left:69px;top:748px;width:1291px;height:1px;background:#ececec"></div>
<div class="eb" style="left:81px;top:729px"><i></i><b></b></div>
<div class="eb" style="left:723px;top:729px"><i></i><b></b></div>
<div class="c" style="left:99px;top:729px;width:47px;color:#000">105734</div>
<div class="c" style="left:147px;top:729px;width:83px;color:#000">07T</div>
<div class="c n" style="left:231px;top:729px;width:277px;color:#000">Lab - Screwed insulation (ft2)</div>
<div class="c n cp" style="left:509px;top:729px;width:214px;color:#000">Roofer</div>
<div class="c r" style="left:741px;top:729px;width:71px;color:#000">600,00</div>
<div class="c u" style="left:813px;top:729px;width:31px;color:#000">ft2</div>
<div class="c r" style="left:845px;top:729px;width:45px;color:#000">4,64</div>
<div class="c r" style="left:891px;top:729px;width:47px;color:#000">0,00 %</div>
<div class="c r" style="left:939px;top:729px;width:59px;color:#000">0,00</div>
<div class="c r" style="left:999px;top:729px;width:56px;color:#000">0,00 %</div>
<div class="c r" style="left:1056px;top:729px;width:71px;color:#000">0,00</div>
<div class="c r" style="left:1128px;top:729px;width:68px;color:#000">4,64</div>
<div class="c r" style="left:1197px;top:729px;width:61px;color:#000">0,50 $</div>
<div class="c u" style="left:1259px;top:729px;width:34px;color:#000">ft2</div>
<div class="c r" style="left:1294px;top:729px;width:66px;color:#000">300,00 $</div>
<div class="vl" style="left:98px;top:729px;height:19px;background:#e6e6e6"></div>
<div class="vl" style="left:146px;top:729px;height:19px;background:#e6e6e6"></div>
<div class="vl" style="left:230px;top:729px;height:19px;background:#e6e6e6"></div>
<div class="vl" style="left:508px;top:729px;height:19px;background:#e6e6e6"></div>
<div class="vl" style="left:740px;top:729px;height:19px;background:#e6e6e6"></div>
<div class="vl" style="left:812px;top:729px;height:19px;background:#e6e6e6"></div>
<div class="vl" style="left:844px;top:729px;height:19px;background:#e6e6e6"></div>
<div class="vl" style="left:890px;top:729px;height:19px;background:#e6e6e6"></div>
<div class="vl" style="left:938px;top:729px;height:19px;background:#e6e6e6"></div>
<div class="vl" style="left:998px;top:729px;height:19px;background:#e6e6e6"></div>
<div class="vl" style="left:1055px;top:729px;height:19px;background:#e6e6e6"></div>
<div class="vl" style="left:1127px;top:729px;height:19px;background:#e6e6e6"></div>
<div class="vl" style="left:1196px;top:729px;height:19px;background:#e6e6e6"></div>
<div class="vl" style="left:1258px;top:729px;height:19px;background:#e6e6e6"></div>
<div class="vl" style="left:1293px;top:729px;height:19px;background:#e6e6e6"></div>
<div class="a" style="left:48px;top:768px;width:21px;height:1px;background:#9a9a9a"></div>
<div class="a" style="left:69px;top:768px;width:1291px;height:1px;background:#ececec"></div>
<div class="eb" style="left:81px;top:749px"><i></i><b></b></div>
<div class="eb" style="left:723px;top:749px"><i></i><b></b></div>
<div class="c" style="left:99px;top:749px;width:47px;color:#000">108030</div>
<div class="c" style="left:147px;top:749px;width:83px;color:#000">07T</div>
<div class="c n" style="left:231px;top:749px;width:277px;color:#000">LAB - Installation Liquid Membrane (ft2)</div>
<div class="c n cp" style="left:509px;top:749px;width:214px;color:#000">Carpenter-Joiner</div>
<div class="c r" style="left:741px;top:749px;width:71px;color:#000">800,00</div>
<div class="c u" style="left:813px;top:749px;width:31px;color:#000">ft2</div>
<div class="c r" style="left:845px;top:749px;width:45px;color:#000">4,80</div>
<div class="c r" style="left:891px;top:749px;width:47px;color:#000">0,00 %</div>
<div class="c r" style="left:939px;top:749px;width:59px;color:#000">0,00</div>
<div class="c r" style="left:999px;top:749px;width:56px;color:#000">0,00 %</div>
<div class="c r" style="left:1056px;top:749px;width:71px;color:#000">0,00</div>
<div class="c r" style="left:1128px;top:749px;width:68px;color:#000">4,80</div>
<div class="c r" style="left:1197px;top:749px;width:61px;color:#000">0,35 $</div>
<div class="c u" style="left:1259px;top:749px;width:34px;color:#000">ft2</div>
<div class="c r" style="left:1294px;top:749px;width:66px;color:#000">278,40 $</div>
<div class="vl" style="left:98px;top:749px;height:19px;background:#e6e6e6"></div>
<div class="vl" style="left:146px;top:749px;height:19px;background:#e6e6e6"></div>
<div class="vl" style="left:230px;top:749px;height:19px;background:#e6e6e6"></div>
<div class="vl" style="left:508px;top:749px;height:19px;background:#e6e6e6"></div>
<div class="vl" style="left:740px;top:749px;height:19px;background:#e6e6e6"></div>
<div class="vl" style="left:812px;top:749px;height:19px;background:#e6e6e6"></div>
<div class="vl" style="left:844px;top:749px;height:19px;background:#e6e6e6"></div>
<div class="vl" style="left:890px;top:749px;height:19px;background:#e6e6e6"></div>
<div class="vl" style="left:938px;top:749px;height:19px;background:#e6e6e6"></div>
<div class="vl" style="left:998px;top:749px;height:19px;background:#e6e6e6"></div>
<div class="vl" style="left:1055px;top:749px;height:19px;background:#e6e6e6"></div>
<div class="vl" style="left:1127px;top:749px;height:19px;background:#e6e6e6"></div>
<div class="vl" style="left:1196px;top:749px;height:19px;background:#e6e6e6"></div>
<div class="vl" style="left:1258px;top:749px;height:19px;background:#e6e6e6"></div>
<div class="vl" style="left:1293px;top:749px;height:19px;background:#e6e6e6"></div>
<div class="a" style="left:48px;top:788px;width:21px;height:1px;background:#9a9a9a"></div>
<div class="a" style="left:69px;top:788px;width:1291px;height:1px;background:#ececec"></div>
<div class="eb" style="left:81px;top:769px"><i></i><b></b></div>
<div class="eb" style="left:723px;top:769px"><i></i><b></b></div>
<div class="c" style="left:99px;top:769px;width:47px;color:#000">102402</div>
<div class="c" style="left:147px;top:769px;width:83px;color:#000">03T</div>
<div class="c n" style="left:231px;top:769px;width:277px;color:#000">Lab - Concrete Pouring (m3)</div>
<div class="c n cp" style="left:509px;top:769px;width:214px;color:#000">Carpenter-Joiner</div>
<div class="c r" style="left:741px;top:769px;width:71px;color:#000">24,54</div>
<div class="c u" style="left:813px;top:769px;width:31px;color:#000">m3</div>
<div class="c r" style="left:845px;top:769px;width:45px;color:#000">4,09</div>
<div class="c r" style="left:891px;top:769px;width:47px;color:#000">0,00 %</div>
<div class="c r" style="left:939px;top:769px;width:59px;color:#000">0,00</div>
<div class="c r" style="left:999px;top:769px;width:56px;color:#000">0,00 %</div>
<div class="c r" style="left:1056px;top:769px;width:71px;color:#000">0,00</div>
<div class="c r" style="left:1128px;top:769px;width:68px;color:#000">4,09</div>
<div class="c r" style="left:1197px;top:769px;width:61px;color:#000">9,67 $</div>
<div class="c u" style="left:1259px;top:769px;width:34px;color:#000">m3</div>
<div class="c r" style="left:1294px;top:769px;width:66px;color:#000">237,23 $</div>
<div class="vl" style="left:98px;top:769px;height:19px;background:#e6e6e6"></div>
<div class="vl" style="left:146px;top:769px;height:19px;background:#e6e6e6"></div>
<div class="vl" style="left:230px;top:769px;height:19px;background:#e6e6e6"></div>
<div class="vl" style="left:508px;top:769px;height:19px;background:#e6e6e6"></div>
<div class="vl" style="left:740px;top:769px;height:19px;background:#e6e6e6"></div>
<div class="vl" style="left:812px;top:769px;height:19px;background:#e6e6e6"></div>
<div class="vl" style="left:844px;top:769px;height:19px;background:#e6e6e6"></div>
<div class="vl" style="left:890px;top:769px;height:19px;background:#e6e6e6"></div>
<div class="vl" style="left:938px;top:769px;height:19px;background:#e6e6e6"></div>
<div class="vl" style="left:998px;top:769px;height:19px;background:#e6e6e6"></div>
<div class="vl" style="left:1055px;top:769px;height:19px;background:#e6e6e6"></div>
<div class="vl" style="left:1127px;top:769px;height:19px;background:#e6e6e6"></div>
<div class="vl" style="left:1196px;top:769px;height:19px;background:#e6e6e6"></div>
<div class="vl" style="left:1258px;top:769px;height:19px;background:#e6e6e6"></div>
<div class="vl" style="left:1293px;top:769px;height:19px;background:#e6e6e6"></div>
<div class="a" style="left:48px;top:808px;width:21px;height:1px;background:#9a9a9a"></div>
<div class="a" style="left:69px;top:808px;width:1291px;height:1px;background:#ececec"></div>
<div class="eb" style="left:81px;top:789px"><i></i><b></b></div>
<div class="eb" style="left:723px;top:789px"><i></i><b></b></div>
<div class="c" style="left:99px;top:789px;width:47px;color:#000">107828</div>
<div class="c" style="left:147px;top:789px;width:83px;color:#000">09T</div>
<div class="c n" style="left:231px;top:789px;width:277px;color:#000">LAB -Laying Gypsum Partition (lin/ft)</div>
<div class="c n cp" style="left:509px;top:789px;width:214px;color:#000">Carpenter-Joiner</div>
<div class="c r" style="left:741px;top:789px;width:71px;color:#000">100,00</div>
<div class="c u" style="left:813px;top:789px;width:31px;color:#000">ft</div>
<div class="c r" style="left:845px;top:789px;width:45px;color:#000">4,00</div>
<div class="c r" style="left:891px;top:789px;width:47px;color:#000">0,00 %</div>
<div class="c r" style="left:939px;top:789px;width:59px;color:#000">0,00</div>
<div class="c r" style="left:999px;top:789px;width:56px;color:#000">0,00 %</div>
<div class="c r" style="left:1056px;top:789px;width:71px;color:#000">0,00</div>
<div class="c r" style="left:1128px;top:789px;width:68px;color:#000">4,00</div>
<div class="c r" style="left:1197px;top:789px;width:61px;color:#000">2,32 $</div>
<div class="c u" style="left:1259px;top:789px;width:34px;color:#000">ft</div>
<div class="c r" style="left:1294px;top:789px;width:66px;color:#000">232,00 $</div>
<div class="vl" style="left:98px;top:789px;height:19px;background:#e6e6e6"></div>
<div class="vl" style="left:146px;top:789px;height:19px;background:#e6e6e6"></div>
<div class="vl" style="left:230px;top:789px;height:19px;background:#e6e6e6"></div>
<div class="vl" style="left:508px;top:789px;height:19px;background:#e6e6e6"></div>
<div class="vl" style="left:740px;top:789px;height:19px;background:#e6e6e6"></div>
<div class="vl" style="left:812px;top:789px;height:19px;background:#e6e6e6"></div>
<div class="vl" style="left:844px;top:789px;height:19px;background:#e6e6e6"></div>
<div class="vl" style="left:890px;top:789px;height:19px;background:#e6e6e6"></div>
<div class="vl" style="left:938px;top:789px;height:19px;background:#e6e6e6"></div>
<div class="vl" style="left:998px;top:789px;height:19px;background:#e6e6e6"></div>
<div class="vl" style="left:1055px;top:789px;height:19px;background:#e6e6e6"></div>
<div class="vl" style="left:1127px;top:789px;height:19px;background:#e6e6e6"></div>
<div class="vl" style="left:1196px;top:789px;height:19px;background:#e6e6e6"></div>
<div class="vl" style="left:1258px;top:789px;height:19px;background:#e6e6e6"></div>
<div class="vl" style="left:1293px;top:789px;height:19px;background:#e6e6e6"></div>
<div class="a" style="left:48px;top:828px;width:21px;height:1px;background:#9a9a9a"></div>
<div class="a" style="left:69px;top:828px;width:1291px;height:1px;background:#ececec"></div>
<div class="eb" style="left:81px;top:809px"><i></i><b></b></div>
<div class="eb" style="left:723px;top:809px"><i></i><b></b></div>
<div class="c" style="left:99px;top:809px;width:47px;color:#000">108011</div>
<div class="c" style="left:147px;top:809px;width:83px;color:#000">06T</div>
<div class="c n" style="left:231px;top:809px;width:277px;color:#000">LAB - Installation Molding Plinths (ft</div>
<div class="c n cp" style="left:509px;top:809px;width:214px;color:#000">Carpenter-Joiner</div>
<div class="c r" style="left:741px;top:809px;width:71px;color:#000">200,00</div>
<div class="c u" style="left:813px;top:809px;width:31px;color:#000">ft</div>
<div class="c r" style="left:845px;top:809px;width:45px;color:#000">2,67</div>
<div class="c r" style="left:891px;top:809px;width:47px;color:#000">0,00 %</div>
<div class="c r" style="left:939px;top:809px;width:59px;color:#000">0,00</div>
<div class="c r" style="left:999px;top:809px;width:56px;color:#000">0,00 %</div>
<div class="c r" style="left:1056px;top:809px;width:71px;color:#000">0,00</div>
<div class="c r" style="left:1128px;top:809px;width:68px;color:#000">2,67</div>
<div class="c r" style="left:1197px;top:809px;width:61px;color:#000">0,77 $</div>
<div class="c u" style="left:1259px;top:809px;width:34px;color:#000">ft</div>
<div class="c r" style="left:1294px;top:809px;width:66px;color:#000">154,67 $</div>
<div class="vl" style="left:98px;top:809px;height:19px;background:#e6e6e6"></div>
<div class="vl" style="left:146px;top:809px;height:19px;background:#e6e6e6"></div>
<div class="vl" style="left:230px;top:809px;height:19px;background:#e6e6e6"></div>
<div class="vl" style="left:508px;top:809px;height:19px;background:#e6e6e6"></div>
<div class="vl" style="left:740px;top:809px;height:19px;background:#e6e6e6"></div>
<div class="vl" style="left:812px;top:809px;height:19px;background:#e6e6e6"></div>
<div class="vl" style="left:844px;top:809px;height:19px;background:#e6e6e6"></div>
<div class="vl" style="left:890px;top:809px;height:19px;background:#e6e6e6"></div>
<div class="vl" style="left:938px;top:809px;height:19px;background:#e6e6e6"></div>
<div class="vl" style="left:998px;top:809px;height:19px;background:#e6e6e6"></div>
<div class="vl" style="left:1055px;top:809px;height:19px;background:#e6e6e6"></div>
<div class="vl" style="left:1127px;top:809px;height:19px;background:#e6e6e6"></div>
<div class="vl" style="left:1196px;top:809px;height:19px;background:#e6e6e6"></div>
<div class="vl" style="left:1258px;top:809px;height:19px;background:#e6e6e6"></div>
<div class="vl" style="left:1293px;top:809px;height:19px;background:#e6e6e6"></div>
<div class="a" style="left:48px;top:848px;width:21px;height:1px;background:#9a9a9a"></div>
<div class="a" style="left:69px;top:848px;width:1291px;height:1px;background:#ececec"></div>
<div class="eb" style="left:81px;top:829px"><i></i><b></b></div>
<div class="eb" style="left:723px;top:829px"><i></i><b></b></div>
<div class="c" style="left:99px;top:829px;width:47px;color:#000">103642</div>
<div class="c" style="left:147px;top:829px;width:83px;color:#000">03T</div>
<div class="c n" style="left:231px;top:829px;width:277px;color:#000">Lab - Slab Wire Mesh Installation (ft2)</div>
<div class="c n cp" style="left:509px;top:829px;width:214px;color:#000">Carpenter-Joiner</div>
<div class="c r" style="left:741px;top:829px;width:71px;color:#000">400,00</div>
<div class="c u" style="left:813px;top:829px;width:31px;color:#000">ft2</div>
<div class="c r" style="left:845px;top:829px;width:45px;color:#000">1,82</div>
<div class="c r" style="left:891px;top:829px;width:47px;color:#000">0,00 %</div>
<div class="c r" style="left:939px;top:829px;width:59px;color:#000">0,00</div>
<div class="c r" style="left:999px;top:829px;width:56px;color:#000">0,00 %</div>
<div class="c r" style="left:1056px;top:829px;width:71px;color:#000">0,00</div>
<div class="c r" style="left:1128px;top:829px;width:68px;color:#000">1,82</div>
<div class="c r" style="left:1197px;top:829px;width:61px;color:#000">0,26 $</div>
<div class="c u" style="left:1259px;top:829px;width:34px;color:#000">ft2</div>
<div class="c r" style="left:1294px;top:829px;width:66px;color:#000">105,65 $</div>
<div class="vl" style="left:98px;top:829px;height:19px;background:#e6e6e6"></div>
<div class="vl" style="left:146px;top:829px;height:19px;background:#e6e6e6"></div>
<div class="vl" style="left:230px;top:829px;height:19px;background:#e6e6e6"></div>
<div class="vl" style="left:508px;top:829px;height:19px;background:#e6e6e6"></div>
<div class="vl" style="left:740px;top:829px;height:19px;background:#e6e6e6"></div>
<div class="vl" style="left:812px;top:829px;height:19px;background:#e6e6e6"></div>
<div class="vl" style="left:844px;top:829px;height:19px;background:#e6e6e6"></div>
<div class="vl" style="left:890px;top:829px;height:19px;background:#e6e6e6"></div>
<div class="vl" style="left:938px;top:829px;height:19px;background:#e6e6e6"></div>
<div class="vl" style="left:998px;top:829px;height:19px;background:#e6e6e6"></div>
<div class="vl" style="left:1055px;top:829px;height:19px;background:#e6e6e6"></div>
<div class="vl" style="left:1127px;top:829px;height:19px;background:#e6e6e6"></div>
<div class="vl" style="left:1196px;top:829px;height:19px;background:#e6e6e6"></div>
<div class="vl" style="left:1258px;top:829px;height:19px;background:#e6e6e6"></div>
<div class="vl" style="left:1293px;top:829px;height:19px;background:#e6e6e6"></div>
<div class="a" style="left:48px;top:868px;width:21px;height:1px;background:#9a9a9a"></div>
<div class="a" style="left:69px;top:868px;width:1291px;height:1px;background:#ececec"></div>
<div class="eb" style="left:81px;top:849px"><i></i><b></b></div>
<div class="eb" style="left:723px;top:849px"><i></i><b></b></div>
<div class="c" style="left:99px;top:849px;width:47px;color:#000">102363</div>
<div class="c" style="left:147px;top:849px;width:83px;color:#000">07T</div>
<div class="c n" style="left:231px;top:849px;width:277px;color:#000">Lab - Floor Rigid Insulation Installation (ft2)</div>
<div class="c n cp" style="left:509px;top:849px;width:214px;color:#000">Carpenter-Joiner</div>
<div class="c r" style="left:741px;top:849px;width:71px;color:#000">400,00</div>
<div class="c u" style="left:813px;top:849px;width:31px;color:#000">ft2</div>
<div class="c r" style="left:845px;top:849px;width:45px;color:#000">1,70</div>
<div class="c r" style="left:891px;top:849px;width:47px;color:#000">0,00 %</div>
<div class="c r" style="left:939px;top:849px;width:59px;color:#000">0,00</div>
<div class="c r" style="left:999px;top:849px;width:56px;color:#000">0,00 %</div>
<div class="c r" style="left:1056px;top:849px;width:71px;color:#000">0,00</div>
<div class="c r" style="left:1128px;top:849px;width:68px;color:#000">1,70</div>
<div class="c r" style="left:1197px;top:849px;width:61px;color:#000">0,25 $</div>
<div class="c u" style="left:1259px;top:849px;width:34px;color:#000">ft2</div>
<div class="c r" style="left:1294px;top:849px;width:66px;color:#000">98,72 $</div>
<div class="vl" style="left:98px;top:849px;height:19px;background:#e6e6e6"></div>
<div class="vl" style="left:146px;top:849px;height:19px;background:#e6e6e6"></div>
<div class="vl" style="left:230px;top:849px;height:19px;background:#e6e6e6"></div>
<div class="vl" style="left:508px;top:849px;height:19px;background:#e6e6e6"></div>
<div class="vl" style="left:740px;top:849px;height:19px;background:#e6e6e6"></div>
<div class="vl" style="left:812px;top:849px;height:19px;background:#e6e6e6"></div>
<div class="vl" style="left:844px;top:849px;height:19px;background:#e6e6e6"></div>
<div class="vl" style="left:890px;top:849px;height:19px;background:#e6e6e6"></div>
<div class="vl" style="left:938px;top:849px;height:19px;background:#e6e6e6"></div>
<div class="vl" style="left:998px;top:849px;height:19px;background:#e6e6e6"></div>
<div class="vl" style="left:1055px;top:849px;height:19px;background:#e6e6e6"></div>
<div class="vl" style="left:1127px;top:849px;height:19px;background:#e6e6e6"></div>
<div class="vl" style="left:1196px;top:849px;height:19px;background:#e6e6e6"></div>
<div class="vl" style="left:1258px;top:849px;height:19px;background:#e6e6e6"></div>
<div class="vl" style="left:1293px;top:849px;height:19px;background:#e6e6e6"></div>
<div class="a" style="left:48px;top:888px;width:21px;height:1px;background:#9a9a9a"></div>
<div class="a" style="left:69px;top:888px;width:1291px;height:1px;background:#ececec"></div>
<div class="eb" style="left:81px;top:869px"><i></i><b></b></div>
<div class="eb" style="left:723px;top:869px"><i></i><b></b></div>
<div class="c" style="left:99px;top:869px;width:47px;color:#000">107972</div>
<div class="c" style="left:147px;top:869px;width:83px;color:#000">09T</div>
<div class="c n" style="left:231px;top:869px;width:277px;color:#000">LAB - Painter at (ft2) Doors</div>
<div class="c n cp" style="left:509px;top:869px;width:214px;color:#000">Painter</div>
<div class="c r" style="left:741px;top:869px;width:71px;color:#000">100,00</div>
<div class="c u" style="left:813px;top:869px;width:31px;color:#000">ft2</div>
<div class="c r" style="left:845px;top:869px;width:45px;color:#000">0,53</div>
<div class="c r" style="left:891px;top:869px;width:47px;color:#000">0,00 %</div>
<div class="c r" style="left:939px;top:869px;width:59px;color:#000">0,00</div>
<div class="c r" style="left:999px;top:869px;width:56px;color:#000">0,00 %</div>
<div class="c r" style="left:1056px;top:869px;width:71px;color:#000">0,00</div>
<div class="c r" style="left:1128px;top:869px;width:68px;color:#000">0,53</div>
<div class="c r" style="left:1197px;top:869px;width:61px;color:#000">0,40 $</div>
<div class="c u" style="left:1259px;top:869px;width:34px;color:#000">ft2</div>
<div class="c r" style="left:1294px;top:869px;width:66px;color:#000">40,00 $</div>
<div class="vl" style="left:98px;top:869px;height:19px;background:#e6e6e6"></div>
<div class="vl" style="left:146px;top:869px;height:19px;background:#e6e6e6"></div>
<div class="vl" style="left:230px;top:869px;height:19px;background:#e6e6e6"></div>
<div class="vl" style="left:508px;top:869px;height:19px;background:#e6e6e6"></div>
<div class="vl" style="left:740px;top:869px;height:19px;background:#e6e6e6"></div>
<div class="vl" style="left:812px;top:869px;height:19px;background:#e6e6e6"></div>
<div class="vl" style="left:844px;top:869px;height:19px;background:#e6e6e6"></div>
<div class="vl" style="left:890px;top:869px;height:19px;background:#e6e6e6"></div>
<div class="vl" style="left:938px;top:869px;height:19px;background:#e6e6e6"></div>
<div class="vl" style="left:998px;top:869px;height:19px;background:#e6e6e6"></div>
<div class="vl" style="left:1055px;top:869px;height:19px;background:#e6e6e6"></div>
<div class="vl" style="left:1127px;top:869px;height:19px;background:#e6e6e6"></div>
<div class="vl" style="left:1196px;top:869px;height:19px;background:#e6e6e6"></div>
<div class="vl" style="left:1258px;top:869px;height:19px;background:#e6e6e6"></div>
<div class="vl" style="left:1293px;top:869px;height:19px;background:#e6e6e6"></div>
<div class="a" style="left:48px;top:908px;width:21px;height:1px;background:#9a9a9a"></div>
<div class="a" style="left:69px;top:908px;width:1291px;height:1px;background:#ececec"></div>
<div class="eb" style="left:81px;top:889px"><i></i><b></b></div>
<div class="eb" style="left:723px;top:889px"><i></i><b></b></div>
<div class="c" style="left:99px;top:889px;width:47px;color:#000">108350</div>
<div class="c" style="left:147px;top:889px;width:83px;color:#000">06T</div>
<div class="c n" style="left:231px;top:889px;width:277px;color:#000">LAB - Carpentry (h)</div>
<div class="c n cp" style="left:509px;top:889px;width:214px;color:#000">Carpenter-Joiner</div>
<div class="c r" style="left:741px;top:889px;width:71px;color:#000">0,00</div>
<div class="c u" style="left:813px;top:889px;width:31px;color:#000">h</div>
<div class="c r" style="left:845px;top:889px;width:45px;color:#000">0,00</div>
<div class="c r" style="left:891px;top:889px;width:47px;color:#000">0,00 %</div>
<div class="c r" style="left:939px;top:889px;width:59px;color:#000">0,00</div>
<div class="c r" style="left:999px;top:889px;width:56px;color:#000">0,00 %</div>
<div class="c r" style="left:1056px;top:889px;width:71px;color:#000">0,00</div>
<div class="c r" style="left:1128px;top:889px;width:68px;color:#000">0,00</div>
<div class="c r" style="left:1197px;top:889px;width:61px;color:#000">0,00 $</div>
<div class="c u" style="left:1259px;top:889px;width:34px;color:#000">h</div>
<div class="c r" style="left:1294px;top:889px;width:66px;color:#000">0,00 $</div>
<div class="vl" style="left:98px;top:889px;height:19px;background:#e6e6e6"></div>
<div class="vl" style="left:146px;top:889px;height:19px;background:#e6e6e6"></div>
<div class="vl" style="left:230px;top:889px;height:19px;background:#e6e6e6"></div>
<div class="vl" style="left:508px;top:889px;height:19px;background:#e6e6e6"></div>
<div class="vl" style="left:740px;top:889px;height:19px;background:#e6e6e6"></div>
<div class="vl" style="left:812px;top:889px;height:19px;background:#e6e6e6"></div>
<div class="vl" style="left:844px;top:889px;height:19px;background:#e6e6e6"></div>
<div class="vl" style="left:890px;top:889px;height:19px;background:#e6e6e6"></div>
<div class="vl" style="left:938px;top:889px;height:19px;background:#e6e6e6"></div>
<div class="vl" style="left:998px;top:889px;height:19px;background:#e6e6e6"></div>
<div class="vl" style="left:1055px;top:889px;height:19px;background:#e6e6e6"></div>
<div class="vl" style="left:1127px;top:889px;height:19px;background:#e6e6e6"></div>
<div class="vl" style="left:1196px;top:889px;height:19px;background:#e6e6e6"></div>
<div class="vl" style="left:1258px;top:889px;height:19px;background:#e6e6e6"></div>
<div class="vl" style="left:1293px;top:889px;height:19px;background:#e6e6e6"></div>
<div class="a" style="left:48px;top:928px;width:21px;height:1px;background:#9a9a9a"></div>
<div class="a" style="left:69px;top:928px;width:1291px;height:1px;background:#ececec"></div>
<div class="eb" style="left:81px;top:909px"><i></i><b></b></div>
<div class="eb" style="left:723px;top:909px"><i></i><b></b></div>
<div class="c" style="left:99px;top:909px;width:47px;color:#000">108080</div>
<div class="c" style="left:147px;top:909px;width:83px;color:#000">01T</div>
<div class="c n" style="left:231px;top:909px;width:277px;color:#000">LAB - Site management (Men,Hrs,Days,Week)</div>
<div class="c n cp" style="left:509px;top:909px;width:214px;color:#000">Project Manager</div>
<div class="c r" style="left:741px;top:909px;width:71px;color:#000">0,00</div>
<div class="c u" style="left:813px;top:909px;width:31px;color:#000">h</div>
<div class="c r" style="left:845px;top:909px;width:45px;color:#000">0,00</div>
<div class="c r" style="left:891px;top:909px;width:47px;color:#000">0,00 %</div>
<div class="c r" style="left:939px;top:909px;width:59px;color:#000">0,00</div>
<div class="c r" style="left:999px;top:909px;width:56px;color:#000">0,00 %</div>
<div class="c r" style="left:1056px;top:909px;width:71px;color:#000">0,00</div>
<div class="c r" style="left:1128px;top:909px;width:68px;color:#000">0,00</div>
<div class="c r" style="left:1197px;top:909px;width:61px;color:#000">0,00 $</div>
<div class="c u" style="left:1259px;top:909px;width:34px;color:#000">h</div>
<div class="c r" style="left:1294px;top:909px;width:66px;color:#000">0,00 $</div>
<div class="vl" style="left:98px;top:909px;height:19px;background:#e6e6e6"></div>
<div class="vl" style="left:146px;top:909px;height:19px;background:#e6e6e6"></div>
<div class="vl" style="left:230px;top:909px;height:19px;background:#e6e6e6"></div>
<div class="vl" style="left:508px;top:909px;height:19px;background:#e6e6e6"></div>
<div class="vl" style="left:740px;top:909px;height:19px;background:#e6e6e6"></div>
<div class="vl" style="left:812px;top:909px;height:19px;background:#e6e6e6"></div>
<div class="vl" style="left:844px;top:909px;height:19px;background:#e6e6e6"></div>
<div class="vl" style="left:890px;top:909px;height:19px;background:#e6e6e6"></div>
<div class="vl" style="left:938px;top:909px;height:19px;background:#e6e6e6"></div>
<div class="vl" style="left:998px;top:909px;height:19px;background:#e6e6e6"></div>
<div class="vl" style="left:1055px;top:909px;height:19px;background:#e6e6e6"></div>
<div class="vl" style="left:1127px;top:909px;height:19px;background:#e6e6e6"></div>
<div class="vl" style="left:1196px;top:909px;height:19px;background:#e6e6e6"></div>
<div class="vl" style="left:1258px;top:909px;height:19px;background:#e6e6e6"></div>
<div class="vl" style="left:1293px;top:909px;height:19px;background:#e6e6e6"></div>
<div class="a" style="left:48px;top:948px;width:21px;height:1px;background:#9a9a9a"></div>
<div class="a" style="left:69px;top:948px;width:1291px;height:1px;background:#ececec"></div>
<div class="eb" style="left:81px;top:929px"><i></i><b></b></div>
<div class="eb" style="left:723px;top:929px"><i></i><b></b></div>
<div class="c" style="left:99px;top:929px;width:47px;color:#000">107202</div>
<div class="c" style="left:147px;top:929px;width:83px;color:#000">02T</div>
<div class="c n" style="left:231px;top:929px;width:277px;color:#000">Lab - Unit Demolition (Unit)</div>
<div class="c n cp" style="left:509px;top:929px;width:214px;color:#000">Carpenter-Joiner</div>
<div class="c r" style="left:741px;top:929px;width:71px;color:#000">0,00</div>
<div class="c u" style="left:813px;top:929px;width:31px;color:#000">h</div>
<div class="c r" style="left:845px;top:929px;width:45px;color:#000">0,00</div>
<div class="c r" style="left:891px;top:929px;width:47px;color:#000">0,00 %</div>
<div class="c r" style="left:939px;top:929px;width:59px;color:#000">0,00</div>
<div class="c r" style="left:999px;top:929px;width:56px;color:#000">0,00 %</div>
<div class="c r" style="left:1056px;top:929px;width:71px;color:#000">0,00</div>
<div class="c r" style="left:1128px;top:929px;width:68px;color:#000">0,00</div>
<div class="c r" style="left:1197px;top:929px;width:61px;color:#000">0,00 $</div>
<div class="c u" style="left:1259px;top:929px;width:34px;color:#000">h</div>
<div class="c r" style="left:1294px;top:929px;width:66px;color:#000">0,00 $</div>
<div class="vl" style="left:98px;top:929px;height:19px;background:#e6e6e6"></div>
<div class="vl" style="left:146px;top:929px;height:19px;background:#e6e6e6"></div>
<div class="vl" style="left:230px;top:929px;height:19px;background:#e6e6e6"></div>
<div class="vl" style="left:508px;top:929px;height:19px;background:#e6e6e6"></div>
<div class="vl" style="left:740px;top:929px;height:19px;background:#e6e6e6"></div>
<div class="vl" style="left:812px;top:929px;height:19px;background:#e6e6e6"></div>
<div class="vl" style="left:844px;top:929px;height:19px;background:#e6e6e6"></div>
<div class="vl" style="left:890px;top:929px;height:19px;background:#e6e6e6"></div>
<div class="vl" style="left:938px;top:929px;height:19px;background:#e6e6e6"></div>
<div class="vl" style="left:998px;top:929px;height:19px;background:#e6e6e6"></div>
<div class="vl" style="left:1055px;top:929px;height:19px;background:#e6e6e6"></div>
<div class="vl" style="left:1127px;top:929px;height:19px;background:#e6e6e6"></div>
<div class="vl" style="left:1196px;top:929px;height:19px;background:#e6e6e6"></div>
<div class="vl" style="left:1258px;top:929px;height:19px;background:#e6e6e6"></div>
<div class="vl" style="left:1293px;top:929px;height:19px;background:#e6e6e6"></div>
<div class="a" style="left:48px;top:968px;width:21px;height:1px;background:#9a9a9a"></div>
<div class="a" style="left:69px;top:968px;width:1291px;height:1px;background:#ececec"></div>
<div class="eb" style="left:81px;top:949px"><i></i><b></b></div>
<div class="eb" style="left:723px;top:949px"><i></i><b></b></div>
<div class="c" style="left:99px;top:949px;width:47px;color:#000">105195</div>
<div class="c" style="left:147px;top:949px;width:83px;color:#000">02T</div>
<div class="c n" style="left:231px;top:949px;width:277px;color:#000">Lab - Demolition (ft2)</div>
<div class="c n cp" style="left:509px;top:949px;width:214px;color:#000">Carpenter-Joiner</div>
<div class="c r" style="left:741px;top:949px;width:71px;color:#000">0,00</div>
<div class="c u" style="left:813px;top:949px;width:31px;color:#000">ft2</div>
<div class="c r" style="left:845px;top:949px;width:45px;color:#000">0,00</div>
<div class="c r" style="left:891px;top:949px;width:47px;color:#000">0,00 %</div>
<div class="c r" style="left:939px;top:949px;width:59px;color:#000">0,00</div>
<div class="c r" style="left:999px;top:949px;width:56px;color:#000">0,00 %</div>
<div class="c r" style="left:1056px;top:949px;width:71px;color:#000">0,00</div>
<div class="c r" style="left:1128px;top:949px;width:68px;color:#000">0,00</div>
<div class="c r" style="left:1197px;top:949px;width:61px;color:#000">0,00 $</div>
<div class="c u" style="left:1259px;top:949px;width:34px;color:#000">ft2</div>
<div class="c r" style="left:1294px;top:949px;width:66px;color:#000">0,00 $</div>
<div class="vl" style="left:98px;top:949px;height:19px;background:#e6e6e6"></div>
<div class="vl" style="left:146px;top:949px;height:19px;background:#e6e6e6"></div>
<div class="vl" style="left:230px;top:949px;height:19px;background:#e6e6e6"></div>
<div class="vl" style="left:508px;top:949px;height:19px;background:#e6e6e6"></div>
<div class="vl" style="left:740px;top:949px;height:19px;background:#e6e6e6"></div>
<div class="vl" style="left:812px;top:949px;height:19px;background:#e6e6e6"></div>
<div class="vl" style="left:844px;top:949px;height:19px;background:#e6e6e6"></div>
<div class="vl" style="left:890px;top:949px;height:19px;background:#e6e6e6"></div>
<div class="vl" style="left:938px;top:949px;height:19px;background:#e6e6e6"></div>
<div class="vl" style="left:998px;top:949px;height:19px;background:#e6e6e6"></div>
<div class="vl" style="left:1055px;top:949px;height:19px;background:#e6e6e6"></div>
<div class="vl" style="left:1127px;top:949px;height:19px;background:#e6e6e6"></div>
<div class="vl" style="left:1196px;top:949px;height:19px;background:#e6e6e6"></div>
<div class="vl" style="left:1258px;top:949px;height:19px;background:#e6e6e6"></div>
<div class="vl" style="left:1293px;top:949px;height:19px;background:#e6e6e6"></div>
<div class="a" style="left:48px;top:988px;width:21px;height:1px;background:#9a9a9a"></div>
<div class="a" style="left:69px;top:988px;width:1291px;height:1px;background:#ececec"></div>
<div class="eb" style="left:81px;top:969px"><i></i><b></b></div>
<div class="eb" style="left:723px;top:969px"><i></i><b></b></div>
<div class="c" style="left:99px;top:969px;width:47px;color:#000">108358</div>
<div class="c" style="left:147px;top:969px;width:83px;color:#000">02T</div>
<div class="c n" style="left:231px;top:969px;width:277px;color:#000">LAB - Wood floor demolition (ft2)</div>
<div class="c n cp" style="left:509px;top:969px;width:214px;color:#000">Carpenter-Joiner</div>
<div class="c r" style="left:741px;top:969px;width:71px;color:#000">0,00</div>
<div class="c u" style="left:813px;top:969px;width:31px;color:#000">ft2</div>
<div class="c r" style="left:845px;top:969px;width:45px;color:#000">0,00</div>
<div class="c r" style="left:891px;top:969px;width:47px;color:#000">0,00 %</div>
<div class="c r" style="left:939px;top:969px;width:59px;color:#000">0,00</div>
<div class="c r" style="left:999px;top:969px;width:56px;color:#000">0,00 %</div>
<div class="c r" style="left:1056px;top:969px;width:71px;color:#000">0,00</div>
<div class="c r" style="left:1128px;top:969px;width:68px;color:#000">0,00</div>
<div class="c r" style="left:1197px;top:969px;width:61px;color:#000">0,00 $</div>
<div class="c u" style="left:1259px;top:969px;width:34px;color:#000">ft2</div>
<div class="c r" style="left:1294px;top:969px;width:66px;color:#000">0,00 $</div>
<div class="vl" style="left:98px;top:969px;height:19px;background:#e6e6e6"></div>
<div class="vl" style="left:146px;top:969px;height:19px;background:#e6e6e6"></div>
<div class="vl" style="left:230px;top:969px;height:19px;background:#e6e6e6"></div>
<div class="vl" style="left:508px;top:969px;height:19px;background:#e6e6e6"></div>
<div class="vl" style="left:740px;top:969px;height:19px;background:#e6e6e6"></div>
<div class="vl" style="left:812px;top:969px;height:19px;background:#e6e6e6"></div>
<div class="vl" style="left:844px;top:969px;height:19px;background:#e6e6e6"></div>
<div class="vl" style="left:890px;top:969px;height:19px;background:#e6e6e6"></div>
<div class="vl" style="left:938px;top:969px;height:19px;background:#e6e6e6"></div>
<div class="vl" style="left:998px;top:969px;height:19px;background:#e6e6e6"></div>
<div class="vl" style="left:1055px;top:969px;height:19px;background:#e6e6e6"></div>
<div class="vl" style="left:1127px;top:969px;height:19px;background:#e6e6e6"></div>
<div class="vl" style="left:1196px;top:969px;height:19px;background:#e6e6e6"></div>
<div class="vl" style="left:1258px;top:969px;height:19px;background:#e6e6e6"></div>
<div class="vl" style="left:1293px;top:969px;height:19px;background:#e6e6e6"></div>
<div class="a" style="left:48px;top:1008px;width:21px;height:1px;background:#9a9a9a"></div>
<div class="a" style="left:69px;top:1008px;width:1291px;height:1px;background:#ececec"></div>
<div class="eb" style="left:81px;top:989px"><i></i><b></b></div>
<div class="eb" style="left:723px;top:989px"><i></i><b></b></div>
<div class="c" style="left:99px;top:989px;width:47px;color:#000">108360</div>
<div class="c" style="left:147px;top:989px;width:83px;color:#000">02T</div>
<div class="c n" style="left:231px;top:989px;width:277px;color:#000">LAB - Ceramic floor demolition (ft2)</div>
<div class="c n cp" style="left:509px;top:989px;width:214px;color:#000">Carpenter-Joiner</div>
<div class="c r" style="left:741px;top:989px;width:71px;color:#000">0,00</div>
<div class="c u" style="left:813px;top:989px;width:31px;color:#000">ft2</div>
<div class="c r" style="left:845px;top:989px;width:45px;color:#000">0,00</div>
<div class="c r" style="left:891px;top:989px;width:47px;color:#000">0,00 %</div>
<div class="c r" style="left:939px;top:989px;width:59px;color:#000">0,00</div>
<div class="c r" style="left:999px;top:989px;width:56px;color:#000">0,00 %</div>
<div class="c r" style="left:1056px;top:989px;width:71px;color:#000">0,00</div>
<div class="c r" style="left:1128px;top:989px;width:68px;color:#000">0,00</div>
<div class="c r" style="left:1197px;top:989px;width:61px;color:#000">0,00 $</div>
<div class="c u" style="left:1259px;top:989px;width:34px;color:#000">ft2</div>
<div class="c r" style="left:1294px;top:989px;width:66px;color:#000">0,00 $</div>
<div class="vl" style="left:98px;top:989px;height:19px;background:#e6e6e6"></div>
<div class="vl" style="left:146px;top:989px;height:19px;background:#e6e6e6"></div>
<div class="vl" style="left:230px;top:989px;height:19px;background:#e6e6e6"></div>
<div class="vl" style="left:508px;top:989px;height:19px;background:#e6e6e6"></div>
<div class="vl" style="left:740px;top:989px;height:19px;background:#e6e6e6"></div>
<div class="vl" style="left:812px;top:989px;height:19px;background:#e6e6e6"></div>
<div class="vl" style="left:844px;top:989px;height:19px;background:#e6e6e6"></div>
<div class="vl" style="left:890px;top:989px;height:19px;background:#e6e6e6"></div>
<div class="vl" style="left:938px;top:989px;height:19px;background:#e6e6e6"></div>
<div class="vl" style="left:998px;top:989px;height:19px;background:#e6e6e6"></div>
<div class="vl" style="left:1055px;top:989px;height:19px;background:#e6e6e6"></div>
<div class="vl" style="left:1127px;top:989px;height:19px;background:#e6e6e6"></div>
<div class="vl" style="left:1196px;top:989px;height:19px;background:#e6e6e6"></div>
<div class="vl" style="left:1258px;top:989px;height:19px;background:#e6e6e6"></div>
<div class="vl" style="left:1293px;top:989px;height:19px;background:#e6e6e6"></div>
<div class="a" style="left:48px;top:1028px;width:21px;height:1px;background:#9a9a9a"></div>
<div class="a" style="left:69px;top:1028px;width:1291px;height:1px;background:#ececec"></div>
<div class="eb" style="left:81px;top:1009px"><i></i><b></b></div>
<div class="eb" style="left:723px;top:1009px"><i></i><b></b></div>
<div class="c" style="left:99px;top:1009px;width:47px;color:#000">102321</div>
<div class="c" style="left:147px;top:1009px;width:83px;color:#000">06T</div>
<div class="c n" style="left:231px;top:1009px;width:277px;color:#000">Lab - Floor Plywood Installation (ft2)</div>
<div class="c n cp" style="left:509px;top:1009px;width:214px;color:#000">Carpenter-Joiner</div>
<div class="c r" style="left:741px;top:1009px;width:71px;color:#000">0,00</div>
<div class="c u" style="left:813px;top:1009px;width:31px;color:#000">ft2</div>
<div class="c r" style="left:845px;top:1009px;width:45px;color:#000">0,00</div>
<div class="c r" style="left:891px;top:1009px;width:47px;color:#000">0,00 %</div>
<div class="c r" style="left:939px;top:1009px;width:59px;color:#000">0,00</div>
<div class="c r" style="left:999px;top:1009px;width:56px;color:#000">0,00 %</div>
<div class="c r" style="left:1056px;top:1009px;width:71px;color:#000">0,00</div>
<div class="c r" style="left:1128px;top:1009px;width:68px;color:#000">0,00</div>
<div class="c r" style="left:1197px;top:1009px;width:61px;color:#000">0,00 $</div>
<div class="c u" style="left:1259px;top:1009px;width:34px;color:#000">ft2</div>
<div class="c r" style="left:1294px;top:1009px;width:66px;color:#000">0,00 $</div>
<div class="vl" style="left:98px;top:1009px;height:19px;background:#e6e6e6"></div>
<div class="vl" style="left:146px;top:1009px;height:19px;background:#e6e6e6"></div>
<div class="vl" style="left:230px;top:1009px;height:19px;background:#e6e6e6"></div>
<div class="vl" style="left:508px;top:1009px;height:19px;background:#e6e6e6"></div>
<div class="vl" style="left:740px;top:1009px;height:19px;background:#e6e6e6"></div>
<div class="vl" style="left:812px;top:1009px;height:19px;background:#e6e6e6"></div>
<div class="vl" style="left:844px;top:1009px;height:19px;background:#e6e6e6"></div>
<div class="vl" style="left:890px;top:1009px;height:19px;background:#e6e6e6"></div>
<div class="vl" style="left:938px;top:1009px;height:19px;background:#e6e6e6"></div>
<div class="vl" style="left:998px;top:1009px;height:19px;background:#e6e6e6"></div>
<div class="vl" style="left:1055px;top:1009px;height:19px;background:#e6e6e6"></div>
<div class="vl" style="left:1127px;top:1009px;height:19px;background:#e6e6e6"></div>
<div class="vl" style="left:1196px;top:1009px;height:19px;background:#e6e6e6"></div>
<div class="vl" style="left:1258px;top:1009px;height:19px;background:#e6e6e6"></div>
<div class="vl" style="left:1293px;top:1009px;height:19px;background:#e6e6e6"></div>
<div class="a" style="left:48px;top:1048px;width:21px;height:1px;background:#9a9a9a"></div>
<div class="a" style="left:69px;top:1048px;width:1291px;height:1px;background:#ececec"></div>
<div class="eb" style="left:81px;top:1029px"><i></i><b></b></div>
<div class="eb" style="left:723px;top:1029px"><i></i><b></b></div>
<div class="c" style="left:99px;top:1029px;width:47px;color:#000">105717</div>
<div class="c" style="left:147px;top:1029px;width:83px;color:#000">03T</div>
<div class="c n" style="left:231px;top:1029px;width:277px;color:#000">Lab - Snow Removal (h)</div>
<div class="c n cp" style="left:509px;top:1029px;width:214px;color:#000">Laborer (Daily)</div>
<div class="c r" style="left:741px;top:1029px;width:71px;color:#000">0,00</div>
<div class="c u" style="left:813px;top:1029px;width:31px;color:#000">h</div>
<div class="c r" style="left:845px;top:1029px;width:45px;color:#000">0,00</div>
<div class="c r" style="left:891px;top:1029px;width:47px;color:#000">0,00 %</div>
<div class="c r" style="left:939px;top:1029px;width:59px;color:#000">0,00</div>
<div class="c r" style="left:999px;top:1029px;width:56px;color:#000">0,00 %</div>
<div class="c r" style="left:1056px;top:1029px;width:71px;color:#000">0,00</div>
<div class="c r" style="left:1128px;top:1029px;width:68px;color:#000">0,00</div>
<div class="c r" style="left:1197px;top:1029px;width:61px;color:#000">0,00 $</div>
<div class="c u" style="left:1259px;top:1029px;width:34px;color:#000">h</div>
<div class="c r" style="left:1294px;top:1029px;width:66px;color:#000">0,00 $</div>
<div class="vl" style="left:98px;top:1029px;height:19px;background:#e6e6e6"></div>
<div class="vl" style="left:146px;top:1029px;height:19px;background:#e6e6e6"></div>
<div class="vl" style="left:230px;top:1029px;height:19px;background:#e6e6e6"></div>
<div class="vl" style="left:508px;top:1029px;height:19px;background:#e6e6e6"></div>
<div class="vl" style="left:740px;top:1029px;height:19px;background:#e6e6e6"></div>
<div class="vl" style="left:812px;top:1029px;height:19px;background:#e6e6e6"></div>
<div class="vl" style="left:844px;top:1029px;height:19px;background:#e6e6e6"></div>
<div class="vl" style="left:890px;top:1029px;height:19px;background:#e6e6e6"></div>
<div class="vl" style="left:938px;top:1029px;height:19px;background:#e6e6e6"></div>
<div class="vl" style="left:998px;top:1029px;height:19px;background:#e6e6e6"></div>
<div class="vl" style="left:1055px;top:1029px;height:19px;background:#e6e6e6"></div>
<div class="vl" style="left:1127px;top:1029px;height:19px;background:#e6e6e6"></div>
<div class="vl" style="left:1196px;top:1029px;height:19px;background:#e6e6e6"></div>
<div class="vl" style="left:1258px;top:1029px;height:19px;background:#e6e6e6"></div>
<div class="vl" style="left:1293px;top:1029px;height:19px;background:#e6e6e6"></div>
<div class="a" style="left:48px;top:1068px;width:21px;height:1px;background:#9a9a9a"></div>
<div class="a" style="left:69px;top:1068px;width:1291px;height:1px;background:#ececec"></div>
<div class="eb" style="left:81px;top:1049px"><i></i><b></b></div>
<div class="eb" style="left:723px;top:1049px"><i></i><b></b></div>
<div class="c" style="left:99px;top:1049px;width:47px;color:#000">108363</div>
<div class="c" style="left:147px;top:1049px;width:83px;color:#000">13T</div>
<div class="c n" style="left:231px;top:1049px;width:277px;color:#000">LAB -Bathroom fan, Oven &amp; Dryer outlet</div>
<div class="c n cp" style="left:509px;top:1049px;width:214px;color:#000">Carpenter-Joiner</div>
<div class="c r" style="left:741px;top:1049px;width:71px;color:#000">0,00</div>
<div class="c u" style="left:813px;top:1049px;width:31px;color:#000">unit</div>
<div class="c r" style="left:845px;top:1049px;width:45px;color:#000">0,00</div>
<div class="c r" style="left:891px;top:1049px;width:47px;color:#000">0,00 %</div>
<div class="c r" style="left:939px;top:1049px;width:59px;color:#000">0,00</div>
<div class="c r" style="left:999px;top:1049px;width:56px;color:#000">0,00 %</div>
<div class="c r" style="left:1056px;top:1049px;width:71px;color:#000">0,00</div>
<div class="c r" style="left:1128px;top:1049px;width:68px;color:#000">0,00</div>
<div class="c r" style="left:1197px;top:1049px;width:61px;color:#000">0,00 $</div>
<div class="c u" style="left:1259px;top:1049px;width:34px;color:#000">unit</div>
<div class="c r" style="left:1294px;top:1049px;width:66px;color:#000">0,00 $</div>
<div class="vl" style="left:98px;top:1049px;height:19px;background:#e6e6e6"></div>
<div class="vl" style="left:146px;top:1049px;height:19px;background:#e6e6e6"></div>
<div class="vl" style="left:230px;top:1049px;height:19px;background:#e6e6e6"></div>
<div class="vl" style="left:508px;top:1049px;height:19px;background:#e6e6e6"></div>
<div class="vl" style="left:740px;top:1049px;height:19px;background:#e6e6e6"></div>
<div class="vl" style="left:812px;top:1049px;height:19px;background:#e6e6e6"></div>
<div class="vl" style="left:844px;top:1049px;height:19px;background:#e6e6e6"></div>
<div class="vl" style="left:890px;top:1049px;height:19px;background:#e6e6e6"></div>
<div class="vl" style="left:938px;top:1049px;height:19px;background:#e6e6e6"></div>
<div class="vl" style="left:998px;top:1049px;height:19px;background:#e6e6e6"></div>
<div class="vl" style="left:1055px;top:1049px;height:19px;background:#e6e6e6"></div>
<div class="vl" style="left:1127px;top:1049px;height:19px;background:#e6e6e6"></div>
<div class="vl" style="left:1196px;top:1049px;height:19px;background:#e6e6e6"></div>
<div class="vl" style="left:1258px;top:1049px;height:19px;background:#e6e6e6"></div>
<div class="vl" style="left:1293px;top:1049px;height:19px;background:#e6e6e6"></div>
<div class="a" style="left:509px;top:369px;width:214px;height:19px;background:#fff;border:1px dotted #000"></div>
<div class="c n cp" style="left:509px;top:369px;width:214px;color:#000">Tiler</div>
<svg class="a" style="left:0;top:0;overflow:visible" width="1" height="1"><defs><filter id="sh1" x="-50%" y="-50%" width="200%" height="200%"><feDropShadow dx="2" dy="2" stdDeviation="1.5" flood-color="#000" flood-opacity="0.4"/></filter></defs><g filter="url(#sh1)"><line x1="922.8" y1="319.3" x2="922.8" y2="360.8" stroke="#870000" stroke-width="1.6"/><path d="M919.0999999999999 359.8 H926.5 L922.8 369.8 Z" fill="#870000"/><circle cx="920.5" cy="311.3" r="14.5" fill="#870000"/></g><text x="920.5" y="317.3" text-anchor="middle" font-family="Liberation Sans" font-size="17" fill="#fff">1</text></svg>
<svg class="a" style="left:0;top:0;overflow:visible" width="1" height="1"><defs><filter id="sh2" x="-50%" y="-50%" width="200%" height="200%"><feDropShadow dx="2" dy="2" stdDeviation="1.5" flood-color="#000" flood-opacity="0.4"/></filter></defs><g filter="url(#sh2)"><line x1="978" y1="318.4" x2="978" y2="360.8" stroke="#870000" stroke-width="1.6"/><path d="M974.3 359.8 H981.7 L978 369.8 Z" fill="#870000"/><circle cx="975.4" cy="310.4" r="14.5" fill="#870000"/></g><text x="975.4" y="316.4" text-anchor="middle" font-family="Liberation Sans" font-size="17" fill="#fff">2</text></svg>
<svg class="a" style="left:0;top:0;overflow:visible" width="1" height="1"><defs><filter id="sh3" x="-50%" y="-50%" width="200%" height="200%"><feDropShadow dx="2" dy="2" stdDeviation="1.5" flood-color="#000" flood-opacity="0.4"/></filter></defs><g filter="url(#sh3)"><line x1="1163.5" y1="318.6" x2="1163.5" y2="360.8" stroke="#870000" stroke-width="1.6"/><path d="M1159.8 359.8 H1167.2 L1163.5 369.8 Z" fill="#870000"/><circle cx="1161.4" cy="310.6" r="14.5" fill="#870000"/></g><text x="1161.4" y="316.6" text-anchor="middle" font-family="Liberation Sans" font-size="17" fill="#fff">3</text></svg>
<svg class="a" style="left:0;top:0;overflow:visible" width="1" height="1"><defs><filter id="sh4" x="-50%" y="-50%" width="200%" height="200%"><feDropShadow dx="2" dy="2" stdDeviation="1.5" flood-color="#000" flood-opacity="0.4"/></filter></defs><g filter="url(#sh4)"><line x1="1240" y1="319.2" x2="1240" y2="360.8" stroke="#870000" stroke-width="1.6"/><path d="M1236.3 359.8 H1243.7 L1240 369.8 Z" fill="#870000"/><circle cx="1239.3" cy="311.2" r="14.5" fill="#870000"/></g><text x="1239.3" y="317.2" text-anchor="middle" font-family="Liberation Sans" font-size="17" fill="#fff">4</text></svg>
</body></html>
